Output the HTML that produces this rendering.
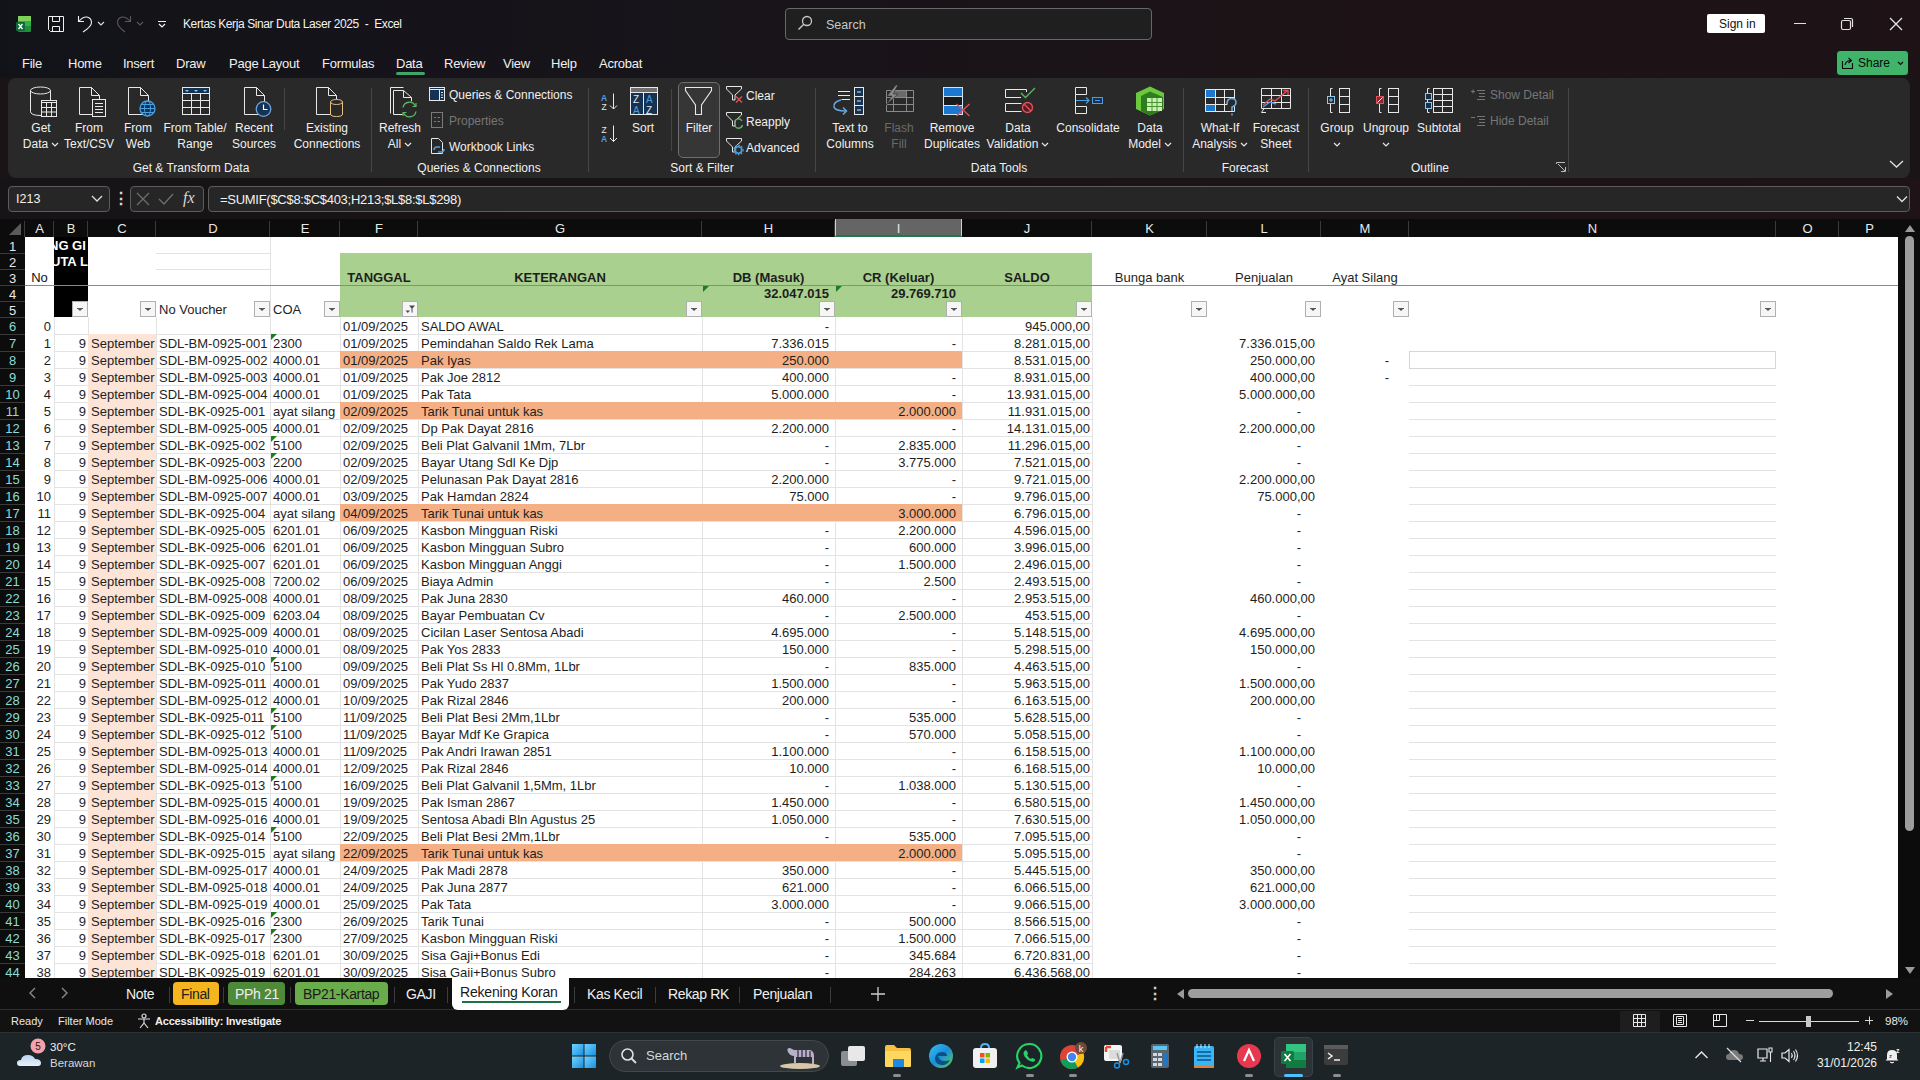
<!DOCTYPE html><html><head><meta charset="utf-8"><style>
*{margin:0;padding:0;box-sizing:border-box}
html,body{width:1920px;height:1080px;overflow:hidden;background:#1a1416;font-family:"Liberation Sans",sans-serif}
.t{position:absolute;white-space:nowrap;color:#fff}
.c{position:absolute;white-space:nowrap;overflow:hidden;font-size:13px;color:#1e1e1e}
svg{position:absolute;overflow:visible}
</style></head><body>
<div style="position:absolute;left:0px;top:0px;width:1920px;height:78px;background:linear-gradient(90deg,#121318 0%,#17141a 35%,#1d1317 70%,#1e1216 100%)"></div>
<div style="position:absolute;left:8px;top:78px;width:1902px;height:100px;background:#292929;border-radius:8px"></div>
<div style="position:absolute;left:0px;top:178px;width:1920px;height:41px;background:linear-gradient(90deg,#161416 0%,#1b1416 50%,#1e1316 100%)"></div>
<div style="position:absolute;left:0px;top:219px;width:1920px;height:18px;background:#0c0c0c"></div>
<div style="position:absolute;left:0px;top:237px;width:25px;height:741px;background:#0c0c0c"></div>
<div style="position:absolute;left:25px;top:237px;width:1873px;height:741px;background:#fff"></div>
<div style="position:absolute;left:1900px;top:219px;width:20px;height:759px;background:#0c0c0c"></div>
<div style="position:absolute;left:53px;top:221px;width:1px;height:16px;background:#3a3a3a"></div>
<div class="t" style="left:25px;top:219px;width:29px;height:18px;line-height:19px;text-align:center;font-size:13px;color:#e8e8e8">A</div>
<div style="position:absolute;left:87px;top:221px;width:1px;height:16px;background:#3a3a3a"></div>
<div class="t" style="left:54px;top:219px;width:34px;height:18px;line-height:19px;text-align:center;font-size:13px;color:#e8e8e8">B</div>
<div style="position:absolute;left:155px;top:221px;width:1px;height:16px;background:#3a3a3a"></div>
<div class="t" style="left:88px;top:219px;width:68px;height:18px;line-height:19px;text-align:center;font-size:13px;color:#e8e8e8">C</div>
<div style="position:absolute;left:269px;top:221px;width:1px;height:16px;background:#3a3a3a"></div>
<div class="t" style="left:156px;top:219px;width:114px;height:18px;line-height:19px;text-align:center;font-size:13px;color:#e8e8e8">D</div>
<div style="position:absolute;left:339px;top:221px;width:1px;height:16px;background:#3a3a3a"></div>
<div class="t" style="left:270px;top:219px;width:70px;height:18px;line-height:19px;text-align:center;font-size:13px;color:#e8e8e8">E</div>
<div style="position:absolute;left:417px;top:221px;width:1px;height:16px;background:#3a3a3a"></div>
<div class="t" style="left:340px;top:219px;width:78px;height:18px;line-height:19px;text-align:center;font-size:13px;color:#e8e8e8">F</div>
<div style="position:absolute;left:701px;top:221px;width:1px;height:16px;background:#3a3a3a"></div>
<div class="t" style="left:418px;top:219px;width:284px;height:18px;line-height:19px;text-align:center;font-size:13px;color:#e8e8e8">G</div>
<div style="position:absolute;left:834px;top:221px;width:1px;height:16px;background:#3a3a3a"></div>
<div class="t" style="left:702px;top:219px;width:133px;height:18px;line-height:19px;text-align:center;font-size:13px;color:#e8e8e8">H</div>
<div style="position:absolute;left:835px;top:219px;width:127px;height:18px;background:#656565;border-left:1px solid #d0d0d0;border-right:1px solid #d0d0d0;border-bottom:2px solid #1d7a4a"></div>
<div class="t" style="left:835px;top:219px;width:127px;height:18px;line-height:19px;text-align:center;font-size:13px;color:#e8e8e8">I</div>
<div style="position:absolute;left:1091px;top:221px;width:1px;height:16px;background:#3a3a3a"></div>
<div class="t" style="left:962px;top:219px;width:130px;height:18px;line-height:19px;text-align:center;font-size:13px;color:#e8e8e8">J</div>
<div style="position:absolute;left:1206px;top:221px;width:1px;height:16px;background:#3a3a3a"></div>
<div class="t" style="left:1092px;top:219px;width:115px;height:18px;line-height:19px;text-align:center;font-size:13px;color:#e8e8e8">K</div>
<div style="position:absolute;left:1320px;top:221px;width:1px;height:16px;background:#3a3a3a"></div>
<div class="t" style="left:1207px;top:219px;width:114px;height:18px;line-height:19px;text-align:center;font-size:13px;color:#e8e8e8">L</div>
<div style="position:absolute;left:1408px;top:221px;width:1px;height:16px;background:#3a3a3a"></div>
<div class="t" style="left:1321px;top:219px;width:88px;height:18px;line-height:19px;text-align:center;font-size:13px;color:#e8e8e8">M</div>
<div style="position:absolute;left:1775px;top:221px;width:1px;height:16px;background:#3a3a3a"></div>
<div class="t" style="left:1409px;top:219px;width:367px;height:18px;line-height:19px;text-align:center;font-size:13px;color:#e8e8e8">N</div>
<div style="position:absolute;left:1838px;top:221px;width:1px;height:16px;background:#3a3a3a"></div>
<div class="t" style="left:1776px;top:219px;width:63px;height:18px;line-height:19px;text-align:center;font-size:13px;color:#e8e8e8">O</div>
<div class="t" style="left:1839px;top:219px;width:61px;height:18px;line-height:19px;text-align:center;font-size:13px;color:#e8e8e8">P</div>
<svg style="left:0;top:219px" width="25" height="18"><path d="M21 4 L21 16 L9 16 Z" fill="#5a5a5a"/></svg>
<div style="position:absolute;left:24px;top:221px;width:1px;height:16px;background:#3a3a3a"></div>
<div class="t" style="left:0px;top:237px;width:25px;height:16px;line-height:19px;text-align:center;font-size:13px;color:#e8e8e8">1</div>
<div style="position:absolute;left:0px;top:253px;width:25px;height:1px;background:#3a3a3a"></div>
<div class="t" style="left:0px;top:253px;width:25px;height:16px;line-height:19px;text-align:center;font-size:13px;color:#e8e8e8">2</div>
<div style="position:absolute;left:0px;top:269px;width:25px;height:1px;background:#3a3a3a"></div>
<div class="t" style="left:0px;top:269px;width:25px;height:16px;line-height:19px;text-align:center;font-size:13px;color:#e8e8e8">3</div>
<div style="position:absolute;left:0px;top:285px;width:25px;height:1px;background:#3a3a3a"></div>
<div class="t" style="left:0px;top:285px;width:25px;height:16px;line-height:19px;text-align:center;font-size:13px;color:#e8e8e8">4</div>
<div style="position:absolute;left:0px;top:301px;width:25px;height:1px;background:#3a3a3a"></div>
<div class="t" style="left:0px;top:301px;width:25px;height:16px;line-height:19px;text-align:center;font-size:13px;color:#e8e8e8">5</div>
<div style="position:absolute;left:0px;top:317px;width:25px;height:1px;background:#3a3a3a"></div>
<div class="t" style="left:0px;top:317px;width:25px;height:17px;line-height:20px;text-align:center;font-size:13px;color:#8adcd4">6</div>
<div style="position:absolute;left:0px;top:334px;width:25px;height:1px;background:#3a3a3a"></div>
<div class="t" style="left:0px;top:334px;width:25px;height:17px;line-height:20px;text-align:center;font-size:13px;color:#8adcd4">7</div>
<div style="position:absolute;left:0px;top:351px;width:25px;height:1px;background:#3a3a3a"></div>
<div class="t" style="left:0px;top:351px;width:25px;height:17px;line-height:20px;text-align:center;font-size:13px;color:#8adcd4">8</div>
<div style="position:absolute;left:0px;top:368px;width:25px;height:1px;background:#3a3a3a"></div>
<div class="t" style="left:0px;top:368px;width:25px;height:17px;line-height:20px;text-align:center;font-size:13px;color:#8adcd4">9</div>
<div style="position:absolute;left:0px;top:385px;width:25px;height:1px;background:#3a3a3a"></div>
<div class="t" style="left:0px;top:385px;width:25px;height:17px;line-height:20px;text-align:center;font-size:13px;color:#8adcd4">10</div>
<div style="position:absolute;left:0px;top:402px;width:25px;height:1px;background:#3a3a3a"></div>
<div class="t" style="left:0px;top:402px;width:25px;height:17px;line-height:20px;text-align:center;font-size:13px;color:#8adcd4">11</div>
<div style="position:absolute;left:0px;top:419px;width:25px;height:1px;background:#3a3a3a"></div>
<div class="t" style="left:0px;top:419px;width:25px;height:17px;line-height:20px;text-align:center;font-size:13px;color:#8adcd4">12</div>
<div style="position:absolute;left:0px;top:436px;width:25px;height:1px;background:#3a3a3a"></div>
<div class="t" style="left:0px;top:436px;width:25px;height:17px;line-height:20px;text-align:center;font-size:13px;color:#8adcd4">13</div>
<div style="position:absolute;left:0px;top:453px;width:25px;height:1px;background:#3a3a3a"></div>
<div class="t" style="left:0px;top:453px;width:25px;height:17px;line-height:20px;text-align:center;font-size:13px;color:#8adcd4">14</div>
<div style="position:absolute;left:0px;top:470px;width:25px;height:1px;background:#3a3a3a"></div>
<div class="t" style="left:0px;top:470px;width:25px;height:17px;line-height:20px;text-align:center;font-size:13px;color:#8adcd4">15</div>
<div style="position:absolute;left:0px;top:487px;width:25px;height:1px;background:#3a3a3a"></div>
<div class="t" style="left:0px;top:487px;width:25px;height:17px;line-height:20px;text-align:center;font-size:13px;color:#8adcd4">16</div>
<div style="position:absolute;left:0px;top:504px;width:25px;height:1px;background:#3a3a3a"></div>
<div class="t" style="left:0px;top:504px;width:25px;height:17px;line-height:20px;text-align:center;font-size:13px;color:#8adcd4">17</div>
<div style="position:absolute;left:0px;top:521px;width:25px;height:1px;background:#3a3a3a"></div>
<div class="t" style="left:0px;top:521px;width:25px;height:17px;line-height:20px;text-align:center;font-size:13px;color:#8adcd4">18</div>
<div style="position:absolute;left:0px;top:538px;width:25px;height:1px;background:#3a3a3a"></div>
<div class="t" style="left:0px;top:538px;width:25px;height:17px;line-height:20px;text-align:center;font-size:13px;color:#8adcd4">19</div>
<div style="position:absolute;left:0px;top:555px;width:25px;height:1px;background:#3a3a3a"></div>
<div class="t" style="left:0px;top:555px;width:25px;height:17px;line-height:20px;text-align:center;font-size:13px;color:#8adcd4">20</div>
<div style="position:absolute;left:0px;top:572px;width:25px;height:1px;background:#3a3a3a"></div>
<div class="t" style="left:0px;top:572px;width:25px;height:17px;line-height:20px;text-align:center;font-size:13px;color:#8adcd4">21</div>
<div style="position:absolute;left:0px;top:589px;width:25px;height:1px;background:#3a3a3a"></div>
<div class="t" style="left:0px;top:589px;width:25px;height:17px;line-height:20px;text-align:center;font-size:13px;color:#8adcd4">22</div>
<div style="position:absolute;left:0px;top:606px;width:25px;height:1px;background:#3a3a3a"></div>
<div class="t" style="left:0px;top:606px;width:25px;height:17px;line-height:20px;text-align:center;font-size:13px;color:#8adcd4">23</div>
<div style="position:absolute;left:0px;top:623px;width:25px;height:1px;background:#3a3a3a"></div>
<div class="t" style="left:0px;top:623px;width:25px;height:17px;line-height:20px;text-align:center;font-size:13px;color:#8adcd4">24</div>
<div style="position:absolute;left:0px;top:640px;width:25px;height:1px;background:#3a3a3a"></div>
<div class="t" style="left:0px;top:640px;width:25px;height:17px;line-height:20px;text-align:center;font-size:13px;color:#8adcd4">25</div>
<div style="position:absolute;left:0px;top:657px;width:25px;height:1px;background:#3a3a3a"></div>
<div class="t" style="left:0px;top:657px;width:25px;height:17px;line-height:20px;text-align:center;font-size:13px;color:#8adcd4">26</div>
<div style="position:absolute;left:0px;top:674px;width:25px;height:1px;background:#3a3a3a"></div>
<div class="t" style="left:0px;top:674px;width:25px;height:17px;line-height:20px;text-align:center;font-size:13px;color:#8adcd4">27</div>
<div style="position:absolute;left:0px;top:691px;width:25px;height:1px;background:#3a3a3a"></div>
<div class="t" style="left:0px;top:691px;width:25px;height:17px;line-height:20px;text-align:center;font-size:13px;color:#8adcd4">28</div>
<div style="position:absolute;left:0px;top:708px;width:25px;height:1px;background:#3a3a3a"></div>
<div class="t" style="left:0px;top:708px;width:25px;height:17px;line-height:20px;text-align:center;font-size:13px;color:#8adcd4">29</div>
<div style="position:absolute;left:0px;top:725px;width:25px;height:1px;background:#3a3a3a"></div>
<div class="t" style="left:0px;top:725px;width:25px;height:17px;line-height:20px;text-align:center;font-size:13px;color:#8adcd4">30</div>
<div style="position:absolute;left:0px;top:742px;width:25px;height:1px;background:#3a3a3a"></div>
<div class="t" style="left:0px;top:742px;width:25px;height:17px;line-height:20px;text-align:center;font-size:13px;color:#8adcd4">31</div>
<div style="position:absolute;left:0px;top:759px;width:25px;height:1px;background:#3a3a3a"></div>
<div class="t" style="left:0px;top:759px;width:25px;height:17px;line-height:20px;text-align:center;font-size:13px;color:#8adcd4">32</div>
<div style="position:absolute;left:0px;top:776px;width:25px;height:1px;background:#3a3a3a"></div>
<div class="t" style="left:0px;top:776px;width:25px;height:17px;line-height:20px;text-align:center;font-size:13px;color:#8adcd4">33</div>
<div style="position:absolute;left:0px;top:793px;width:25px;height:1px;background:#3a3a3a"></div>
<div class="t" style="left:0px;top:793px;width:25px;height:17px;line-height:20px;text-align:center;font-size:13px;color:#8adcd4">34</div>
<div style="position:absolute;left:0px;top:810px;width:25px;height:1px;background:#3a3a3a"></div>
<div class="t" style="left:0px;top:810px;width:25px;height:17px;line-height:20px;text-align:center;font-size:13px;color:#8adcd4">35</div>
<div style="position:absolute;left:0px;top:827px;width:25px;height:1px;background:#3a3a3a"></div>
<div class="t" style="left:0px;top:827px;width:25px;height:17px;line-height:20px;text-align:center;font-size:13px;color:#8adcd4">36</div>
<div style="position:absolute;left:0px;top:844px;width:25px;height:1px;background:#3a3a3a"></div>
<div class="t" style="left:0px;top:844px;width:25px;height:17px;line-height:20px;text-align:center;font-size:13px;color:#8adcd4">37</div>
<div style="position:absolute;left:0px;top:861px;width:25px;height:1px;background:#3a3a3a"></div>
<div class="t" style="left:0px;top:861px;width:25px;height:17px;line-height:20px;text-align:center;font-size:13px;color:#8adcd4">38</div>
<div style="position:absolute;left:0px;top:878px;width:25px;height:1px;background:#3a3a3a"></div>
<div class="t" style="left:0px;top:878px;width:25px;height:17px;line-height:20px;text-align:center;font-size:13px;color:#8adcd4">39</div>
<div style="position:absolute;left:0px;top:895px;width:25px;height:1px;background:#3a3a3a"></div>
<div class="t" style="left:0px;top:895px;width:25px;height:17px;line-height:20px;text-align:center;font-size:13px;color:#8adcd4">40</div>
<div style="position:absolute;left:0px;top:912px;width:25px;height:1px;background:#3a3a3a"></div>
<div class="t" style="left:0px;top:912px;width:25px;height:17px;line-height:20px;text-align:center;font-size:13px;color:#8adcd4">41</div>
<div style="position:absolute;left:0px;top:929px;width:25px;height:1px;background:#3a3a3a"></div>
<div class="t" style="left:0px;top:929px;width:25px;height:17px;line-height:20px;text-align:center;font-size:13px;color:#8adcd4">42</div>
<div style="position:absolute;left:0px;top:946px;width:25px;height:1px;background:#3a3a3a"></div>
<div class="t" style="left:0px;top:946px;width:25px;height:17px;line-height:20px;text-align:center;font-size:13px;color:#8adcd4">43</div>
<div style="position:absolute;left:0px;top:963px;width:25px;height:1px;background:#3a3a3a"></div>
<div class="t" style="left:0px;top:963px;width:25px;height:17px;line-height:20px;text-align:center;font-size:13px;color:#8adcd4">44</div>
<div style="position:absolute;left:0px;top:980px;width:25px;height:1px;background:#3a3a3a"></div>
<div style="position:absolute;left:54px;top:334px;width:1038px;height:1px;background:#e3e3e3"></div>
<div style="position:absolute;left:54px;top:351px;width:1038px;height:1px;background:#e3e3e3"></div>
<div style="position:absolute;left:54px;top:368px;width:1038px;height:1px;background:#e3e3e3"></div>
<div style="position:absolute;left:1409px;top:368px;width:367px;height:1px;background:#e3e3e3"></div>
<div style="position:absolute;left:54px;top:385px;width:1038px;height:1px;background:#e3e3e3"></div>
<div style="position:absolute;left:1409px;top:385px;width:367px;height:1px;background:#e3e3e3"></div>
<div style="position:absolute;left:54px;top:402px;width:1038px;height:1px;background:#e3e3e3"></div>
<div style="position:absolute;left:1409px;top:402px;width:367px;height:1px;background:#e3e3e3"></div>
<div style="position:absolute;left:54px;top:419px;width:1038px;height:1px;background:#e3e3e3"></div>
<div style="position:absolute;left:1409px;top:419px;width:367px;height:1px;background:#e3e3e3"></div>
<div style="position:absolute;left:54px;top:436px;width:1038px;height:1px;background:#e3e3e3"></div>
<div style="position:absolute;left:1409px;top:436px;width:367px;height:1px;background:#e3e3e3"></div>
<div style="position:absolute;left:54px;top:453px;width:1038px;height:1px;background:#e3e3e3"></div>
<div style="position:absolute;left:1409px;top:453px;width:367px;height:1px;background:#e3e3e3"></div>
<div style="position:absolute;left:54px;top:470px;width:1038px;height:1px;background:#e3e3e3"></div>
<div style="position:absolute;left:1409px;top:470px;width:367px;height:1px;background:#e3e3e3"></div>
<div style="position:absolute;left:54px;top:487px;width:1038px;height:1px;background:#e3e3e3"></div>
<div style="position:absolute;left:1409px;top:487px;width:367px;height:1px;background:#e3e3e3"></div>
<div style="position:absolute;left:54px;top:504px;width:1038px;height:1px;background:#e3e3e3"></div>
<div style="position:absolute;left:1409px;top:504px;width:367px;height:1px;background:#e3e3e3"></div>
<div style="position:absolute;left:54px;top:521px;width:1038px;height:1px;background:#e3e3e3"></div>
<div style="position:absolute;left:1409px;top:521px;width:367px;height:1px;background:#e3e3e3"></div>
<div style="position:absolute;left:54px;top:538px;width:1038px;height:1px;background:#e3e3e3"></div>
<div style="position:absolute;left:1409px;top:538px;width:367px;height:1px;background:#e3e3e3"></div>
<div style="position:absolute;left:54px;top:555px;width:1038px;height:1px;background:#e3e3e3"></div>
<div style="position:absolute;left:1409px;top:555px;width:367px;height:1px;background:#e3e3e3"></div>
<div style="position:absolute;left:54px;top:572px;width:1038px;height:1px;background:#e3e3e3"></div>
<div style="position:absolute;left:1409px;top:572px;width:367px;height:1px;background:#e3e3e3"></div>
<div style="position:absolute;left:54px;top:589px;width:1038px;height:1px;background:#e3e3e3"></div>
<div style="position:absolute;left:1409px;top:589px;width:367px;height:1px;background:#e3e3e3"></div>
<div style="position:absolute;left:54px;top:606px;width:1038px;height:1px;background:#e3e3e3"></div>
<div style="position:absolute;left:1409px;top:606px;width:367px;height:1px;background:#e3e3e3"></div>
<div style="position:absolute;left:54px;top:623px;width:1038px;height:1px;background:#e3e3e3"></div>
<div style="position:absolute;left:1409px;top:623px;width:367px;height:1px;background:#e3e3e3"></div>
<div style="position:absolute;left:54px;top:640px;width:1038px;height:1px;background:#e3e3e3"></div>
<div style="position:absolute;left:1409px;top:640px;width:367px;height:1px;background:#e3e3e3"></div>
<div style="position:absolute;left:54px;top:657px;width:1038px;height:1px;background:#e3e3e3"></div>
<div style="position:absolute;left:1409px;top:657px;width:367px;height:1px;background:#e3e3e3"></div>
<div style="position:absolute;left:54px;top:674px;width:1038px;height:1px;background:#e3e3e3"></div>
<div style="position:absolute;left:1409px;top:674px;width:367px;height:1px;background:#e3e3e3"></div>
<div style="position:absolute;left:54px;top:691px;width:1038px;height:1px;background:#e3e3e3"></div>
<div style="position:absolute;left:1409px;top:691px;width:367px;height:1px;background:#e3e3e3"></div>
<div style="position:absolute;left:54px;top:708px;width:1038px;height:1px;background:#e3e3e3"></div>
<div style="position:absolute;left:1409px;top:708px;width:367px;height:1px;background:#e3e3e3"></div>
<div style="position:absolute;left:54px;top:725px;width:1038px;height:1px;background:#e3e3e3"></div>
<div style="position:absolute;left:1409px;top:725px;width:367px;height:1px;background:#e3e3e3"></div>
<div style="position:absolute;left:54px;top:742px;width:1038px;height:1px;background:#e3e3e3"></div>
<div style="position:absolute;left:1409px;top:742px;width:367px;height:1px;background:#e3e3e3"></div>
<div style="position:absolute;left:54px;top:759px;width:1038px;height:1px;background:#e3e3e3"></div>
<div style="position:absolute;left:1409px;top:759px;width:367px;height:1px;background:#e3e3e3"></div>
<div style="position:absolute;left:54px;top:776px;width:1038px;height:1px;background:#e3e3e3"></div>
<div style="position:absolute;left:1409px;top:776px;width:367px;height:1px;background:#e3e3e3"></div>
<div style="position:absolute;left:54px;top:793px;width:1038px;height:1px;background:#e3e3e3"></div>
<div style="position:absolute;left:1409px;top:793px;width:367px;height:1px;background:#e3e3e3"></div>
<div style="position:absolute;left:54px;top:810px;width:1038px;height:1px;background:#e3e3e3"></div>
<div style="position:absolute;left:1409px;top:810px;width:367px;height:1px;background:#e3e3e3"></div>
<div style="position:absolute;left:54px;top:827px;width:1038px;height:1px;background:#e3e3e3"></div>
<div style="position:absolute;left:1409px;top:827px;width:367px;height:1px;background:#e3e3e3"></div>
<div style="position:absolute;left:54px;top:844px;width:1038px;height:1px;background:#e3e3e3"></div>
<div style="position:absolute;left:1409px;top:844px;width:367px;height:1px;background:#e3e3e3"></div>
<div style="position:absolute;left:54px;top:861px;width:1038px;height:1px;background:#e3e3e3"></div>
<div style="position:absolute;left:1409px;top:861px;width:367px;height:1px;background:#e3e3e3"></div>
<div style="position:absolute;left:54px;top:878px;width:1038px;height:1px;background:#e3e3e3"></div>
<div style="position:absolute;left:1409px;top:878px;width:367px;height:1px;background:#e3e3e3"></div>
<div style="position:absolute;left:54px;top:895px;width:1038px;height:1px;background:#e3e3e3"></div>
<div style="position:absolute;left:1409px;top:895px;width:367px;height:1px;background:#e3e3e3"></div>
<div style="position:absolute;left:54px;top:912px;width:1038px;height:1px;background:#e3e3e3"></div>
<div style="position:absolute;left:1409px;top:912px;width:367px;height:1px;background:#e3e3e3"></div>
<div style="position:absolute;left:54px;top:929px;width:1038px;height:1px;background:#e3e3e3"></div>
<div style="position:absolute;left:1409px;top:929px;width:367px;height:1px;background:#e3e3e3"></div>
<div style="position:absolute;left:54px;top:946px;width:1038px;height:1px;background:#e3e3e3"></div>
<div style="position:absolute;left:1409px;top:946px;width:367px;height:1px;background:#e3e3e3"></div>
<div style="position:absolute;left:54px;top:963px;width:1038px;height:1px;background:#e3e3e3"></div>
<div style="position:absolute;left:1409px;top:963px;width:367px;height:1px;background:#e3e3e3"></div>
<div style="position:absolute;left:54px;top:980px;width:1038px;height:1px;background:#e3e3e3"></div>
<div style="position:absolute;left:1409px;top:980px;width:367px;height:1px;background:#e3e3e3"></div>
<div style="position:absolute;left:54px;top:317px;width:1px;height:661px;background:#e3e3e3"></div>
<div style="position:absolute;left:88px;top:317px;width:1px;height:661px;background:#e3e3e3"></div>
<div style="position:absolute;left:156px;top:317px;width:1px;height:661px;background:#e3e3e3"></div>
<div style="position:absolute;left:270px;top:317px;width:1px;height:661px;background:#e3e3e3"></div>
<div style="position:absolute;left:340px;top:317px;width:1px;height:661px;background:#e3e3e3"></div>
<div style="position:absolute;left:418px;top:317px;width:1px;height:661px;background:#e3e3e3"></div>
<div style="position:absolute;left:702px;top:317px;width:1px;height:661px;background:#e3e3e3"></div>
<div style="position:absolute;left:835px;top:317px;width:1px;height:661px;background:#e3e3e3"></div>
<div style="position:absolute;left:962px;top:317px;width:1px;height:661px;background:#e3e3e3"></div>
<div style="position:absolute;left:1092px;top:317px;width:1px;height:661px;background:#e3e3e3"></div>
<div style="position:absolute;left:156px;top:253px;width:114px;height:1px;background:#e3e3e3"></div>
<div style="position:absolute;left:156px;top:269px;width:114px;height:1px;background:#e3e3e3"></div>
<div style="position:absolute;left:270px;top:237px;width:1px;height:80px;background:#e3e3e3"></div>
<div style="position:absolute;left:88px;top:334px;width:68px;height:644px;background:#fce4d6"></div>
<div style="position:absolute;left:54px;top:237px;width:34px;height:80px;background:#000"></div>
<div class="c" style="left:54px;top:237px;width:34px;height:16px;line-height:17px;color:#fff;font-weight:bold;text-indent:-5px">NG GI</div>
<div class="c" style="left:54px;top:253px;width:34px;height:16px;line-height:17px;color:#fff;font-weight:bold;text-indent:-3px">UTA L</div>
<div style="position:absolute;left:340px;top:253px;width:752px;height:64px;background:#a9d08e"></div>
<div style="position:absolute;left:25px;top:285px;width:1873px;height:1px;background:#8a8a8a"></div>
<div class="c" style="left:25px;top:269px;width:29px;height:16px;line-height:18px;text-align:center;color:#111;">No</div>
<div class="c" style="left:340px;top:269px;width:78px;height:16px;line-height:18px;text-align:center;font-weight:bold;">TANGGAL</div>
<div class="c" style="left:418px;top:269px;width:284px;height:16px;line-height:18px;text-align:center;font-weight:bold;">KETERANGAN</div>
<div class="c" style="left:702px;top:269px;width:133px;height:16px;line-height:18px;text-align:center;font-weight:bold;">DB (Masuk)</div>
<div class="c" style="left:835px;top:269px;width:127px;height:16px;line-height:18px;text-align:center;font-weight:bold;">CR (Keluar)</div>
<div class="c" style="left:962px;top:269px;width:130px;height:16px;line-height:18px;text-align:center;font-weight:bold;">SALDO</div>
<div class="c" style="left:1092px;top:269px;width:115px;height:16px;line-height:18px;text-align:center;">Bunga bank</div>
<div class="c" style="left:1207px;top:269px;width:114px;height:16px;line-height:18px;text-align:center;">Penjualan</div>
<div class="c" style="left:1321px;top:269px;width:88px;height:16px;line-height:18px;text-align:center;">Ayat Silang</div>
<div class="c" style="left:702px;top:285px;width:133px;height:16px;line-height:18px;text-align:right;padding-right:6px;font-weight:bold;">32.047.015</div>
<div class="c" style="left:835px;top:285px;width:127px;height:16px;line-height:18px;text-align:right;padding-right:6px;font-weight:bold;">29.769.710</div>
<div class="c" style="left:156px;top:301px;width:114px;height:16px;line-height:18px;text-align:left;padding-left:3px;">No Voucher</div>
<div class="c" style="left:270px;top:301px;width:70px;height:16px;line-height:18px;text-align:left;padding-left:3px;">COA</div>
<svg style="left:703px;top:286px" width="6" height="6"><path d="M0 0 L6 0 L0 6Z" fill="#1e7b1e"/></svg>
<svg style="left:836px;top:286px" width="6" height="6"><path d="M0 0 L6 0 L0 6Z" fill="#1e7b1e"/></svg>
<div style="position:absolute;left:72px;top:301px;width:16px;height:16px;background:#f6f6f6;border:1px solid #b0b0b0"></div>
<svg style="left:72px;top:301px" width="16" height="16"><path d="M5 7.5 H11" stroke="#5a5a5a" stroke-width="1"/><path d="M6 8 L8 10 L10 8Z" fill="#4a4a4a"/></svg>
<div style="position:absolute;left:140px;top:301px;width:16px;height:16px;background:#f6f6f6;border:1px solid #b0b0b0"></div>
<svg style="left:140px;top:301px" width="16" height="16"><path d="M5 7.5 H11" stroke="#5a5a5a" stroke-width="1"/><path d="M6 8 L8 10 L10 8Z" fill="#4a4a4a"/></svg>
<div style="position:absolute;left:254px;top:301px;width:16px;height:16px;background:#f6f6f6;border:1px solid #b0b0b0"></div>
<svg style="left:254px;top:301px" width="16" height="16"><path d="M5 7.5 H11" stroke="#5a5a5a" stroke-width="1"/><path d="M6 8 L8 10 L10 8Z" fill="#4a4a4a"/></svg>
<div style="position:absolute;left:324px;top:301px;width:16px;height:16px;background:#f6f6f6;border:1px solid #b0b0b0"></div>
<svg style="left:324px;top:301px" width="16" height="16"><path d="M5 7.5 H11" stroke="#5a5a5a" stroke-width="1"/><path d="M6 8 L8 10 L10 8Z" fill="#4a4a4a"/></svg>
<div style="position:absolute;left:686px;top:301px;width:16px;height:16px;background:#f6f6f6;border:1px solid #b0b0b0"></div>
<svg style="left:686px;top:301px" width="16" height="16"><path d="M5 7.5 H11" stroke="#5a5a5a" stroke-width="1"/><path d="M6 8 L8 10 L10 8Z" fill="#4a4a4a"/></svg>
<div style="position:absolute;left:819px;top:301px;width:16px;height:16px;background:#f6f6f6;border:1px solid #b0b0b0"></div>
<svg style="left:819px;top:301px" width="16" height="16"><path d="M5 7.5 H11" stroke="#5a5a5a" stroke-width="1"/><path d="M6 8 L8 10 L10 8Z" fill="#4a4a4a"/></svg>
<div style="position:absolute;left:946px;top:301px;width:16px;height:16px;background:#f6f6f6;border:1px solid #b0b0b0"></div>
<svg style="left:946px;top:301px" width="16" height="16"><path d="M5 7.5 H11" stroke="#5a5a5a" stroke-width="1"/><path d="M6 8 L8 10 L10 8Z" fill="#4a4a4a"/></svg>
<div style="position:absolute;left:1076px;top:301px;width:16px;height:16px;background:#f6f6f6;border:1px solid #b0b0b0"></div>
<svg style="left:1076px;top:301px" width="16" height="16"><path d="M5 7.5 H11" stroke="#5a5a5a" stroke-width="1"/><path d="M6 8 L8 10 L10 8Z" fill="#4a4a4a"/></svg>
<div style="position:absolute;left:1191px;top:301px;width:16px;height:16px;background:#f6f6f6;border:1px solid #b0b0b0"></div>
<svg style="left:1191px;top:301px" width="16" height="16"><path d="M5 7.5 H11" stroke="#5a5a5a" stroke-width="1"/><path d="M6 8 L8 10 L10 8Z" fill="#4a4a4a"/></svg>
<div style="position:absolute;left:1305px;top:301px;width:16px;height:16px;background:#f6f6f6;border:1px solid #b0b0b0"></div>
<svg style="left:1305px;top:301px" width="16" height="16"><path d="M5 7.5 H11" stroke="#5a5a5a" stroke-width="1"/><path d="M6 8 L8 10 L10 8Z" fill="#4a4a4a"/></svg>
<div style="position:absolute;left:1393px;top:301px;width:16px;height:16px;background:#f6f6f6;border:1px solid #b0b0b0"></div>
<svg style="left:1393px;top:301px" width="16" height="16"><path d="M5 7.5 H11" stroke="#5a5a5a" stroke-width="1"/><path d="M6 8 L8 10 L10 8Z" fill="#4a4a4a"/></svg>
<div style="position:absolute;left:1760px;top:301px;width:16px;height:16px;background:#f6f6f6;border:1px solid #b0b0b0"></div>
<svg style="left:1760px;top:301px" width="16" height="16"><path d="M5 7.5 H11" stroke="#5a5a5a" stroke-width="1"/><path d="M6 8 L8 10 L10 8Z" fill="#4a4a4a"/></svg>
<div style="position:absolute;left:402px;top:301px;width:16px;height:16px;background:#f6f6f6;border:1px solid #b0b0b0"></div>
<svg style="left:402px;top:301px" width="16" height="16"><path d="M7 4.5 H13 L10.5 7.5 V11.5 H9.5 V7.5 Z" fill="#4a4a4a"/><path d="M3.5 9.5 H8 L5.75 12Z" fill="#4a4a4a"/></svg>
<div class="c" style="left:25px;top:317px;width:29px;height:17px;line-height:19px;text-align:right;padding-right:3px;">0</div>
<div class="c" style="left:340px;top:317px;width:78px;height:17px;line-height:19px;text-align:left;padding-left:3px;">01/09/2025</div>
<div class="c" style="left:418px;top:317px;width:284px;height:17px;line-height:19px;text-align:left;padding-left:3px;">SALDO AWAL</div>
<div class="c" style="left:702px;top:317px;width:133px;height:17px;line-height:19px;text-align:right;padding-right:6px;">-</div>
<div class="c" style="left:962px;top:317px;width:130px;height:17px;line-height:19px;text-align:right;padding-right:2px;">945.000,00</div>
<div class="c" style="left:25px;top:334px;width:29px;height:17px;line-height:19px;text-align:right;padding-right:3px;">1</div>
<div class="c" style="left:54px;top:334px;width:34px;height:17px;line-height:19px;text-align:right;padding-right:2px;">9</div>
<div class="c" style="left:88px;top:334px;width:68px;height:17px;line-height:19px;text-align:left;padding-left:3px;">September</div>
<div class="c" style="left:156px;top:334px;width:114px;height:17px;line-height:19px;text-align:left;padding-left:3px;">SDL-BM-0925-001</div>
<div class="c" style="left:270px;top:334px;width:70px;height:17px;line-height:19px;text-align:left;padding-left:3px;">2300</div>
<svg style="left:271px;top:334px" width="6" height="6"><path d="M0 0 L6 0 L0 6Z" fill="#1e7b1e"/></svg>
<div class="c" style="left:340px;top:334px;width:78px;height:17px;line-height:19px;text-align:left;padding-left:3px;">01/09/2025</div>
<div class="c" style="left:418px;top:334px;width:284px;height:17px;line-height:19px;text-align:left;padding-left:3px;">Pemindahan Saldo Rek Lama</div>
<div class="c" style="left:702px;top:334px;width:133px;height:17px;line-height:19px;text-align:right;padding-right:6px;">7.336.015</div>
<div class="c" style="left:835px;top:334px;width:127px;height:17px;line-height:19px;text-align:right;padding-right:6px;">-</div>
<div class="c" style="left:962px;top:334px;width:130px;height:17px;line-height:19px;text-align:right;padding-right:2px;">8.281.015,00</div>
<div class="c" style="left:1207px;top:334px;width:114px;height:17px;line-height:19px;text-align:right;padding-right:6px;">7.336.015,00</div>
<div style="position:absolute;left:340px;top:351px;width:622px;height:17px;background:#f4b084"></div>
<div class="c" style="left:25px;top:351px;width:29px;height:17px;line-height:19px;text-align:right;padding-right:3px;">2</div>
<div class="c" style="left:54px;top:351px;width:34px;height:17px;line-height:19px;text-align:right;padding-right:2px;">9</div>
<div class="c" style="left:88px;top:351px;width:68px;height:17px;line-height:19px;text-align:left;padding-left:3px;">September</div>
<div class="c" style="left:156px;top:351px;width:114px;height:17px;line-height:19px;text-align:left;padding-left:3px;">SDL-BM-0925-002</div>
<div class="c" style="left:270px;top:351px;width:70px;height:17px;line-height:19px;text-align:left;padding-left:3px;">4000.01</div>
<div class="c" style="left:340px;top:351px;width:78px;height:17px;line-height:19px;text-align:left;padding-left:3px;">01/09/2025</div>
<div class="c" style="left:418px;top:351px;width:284px;height:17px;line-height:19px;text-align:left;padding-left:3px;">Pak Iyas</div>
<div class="c" style="left:702px;top:351px;width:133px;height:17px;line-height:19px;text-align:right;padding-right:6px;">250.000</div>
<div class="c" style="left:835px;top:351px;width:127px;height:17px;line-height:19px;text-align:right;padding-right:6px;"></div>
<div class="c" style="left:962px;top:351px;width:130px;height:17px;line-height:19px;text-align:right;padding-right:2px;">8.531.015,00</div>
<div class="c" style="left:1207px;top:351px;width:114px;height:17px;line-height:19px;text-align:right;padding-right:6px;">250.000,00</div>
<div class="c" style="left:1321px;top:351px;width:88px;height:17px;line-height:19px;text-align:right;padding-right:20px;">-</div>
<div class="c" style="left:25px;top:368px;width:29px;height:17px;line-height:19px;text-align:right;padding-right:3px;">3</div>
<div class="c" style="left:54px;top:368px;width:34px;height:17px;line-height:19px;text-align:right;padding-right:2px;">9</div>
<div class="c" style="left:88px;top:368px;width:68px;height:17px;line-height:19px;text-align:left;padding-left:3px;">September</div>
<div class="c" style="left:156px;top:368px;width:114px;height:17px;line-height:19px;text-align:left;padding-left:3px;">SDL-BM-0925-003</div>
<div class="c" style="left:270px;top:368px;width:70px;height:17px;line-height:19px;text-align:left;padding-left:3px;">4000.01</div>
<div class="c" style="left:340px;top:368px;width:78px;height:17px;line-height:19px;text-align:left;padding-left:3px;">01/09/2025</div>
<div class="c" style="left:418px;top:368px;width:284px;height:17px;line-height:19px;text-align:left;padding-left:3px;">Pak Joe 2812</div>
<div class="c" style="left:702px;top:368px;width:133px;height:17px;line-height:19px;text-align:right;padding-right:6px;">400.000</div>
<div class="c" style="left:835px;top:368px;width:127px;height:17px;line-height:19px;text-align:right;padding-right:6px;">-</div>
<div class="c" style="left:962px;top:368px;width:130px;height:17px;line-height:19px;text-align:right;padding-right:2px;">8.931.015,00</div>
<div class="c" style="left:1207px;top:368px;width:114px;height:17px;line-height:19px;text-align:right;padding-right:6px;">400.000,00</div>
<div class="c" style="left:1321px;top:368px;width:88px;height:17px;line-height:19px;text-align:right;padding-right:20px;">-</div>
<div class="c" style="left:25px;top:385px;width:29px;height:17px;line-height:19px;text-align:right;padding-right:3px;">4</div>
<div class="c" style="left:54px;top:385px;width:34px;height:17px;line-height:19px;text-align:right;padding-right:2px;">9</div>
<div class="c" style="left:88px;top:385px;width:68px;height:17px;line-height:19px;text-align:left;padding-left:3px;">September</div>
<div class="c" style="left:156px;top:385px;width:114px;height:17px;line-height:19px;text-align:left;padding-left:3px;">SDL-BM-0925-004</div>
<div class="c" style="left:270px;top:385px;width:70px;height:17px;line-height:19px;text-align:left;padding-left:3px;">4000.01</div>
<div class="c" style="left:340px;top:385px;width:78px;height:17px;line-height:19px;text-align:left;padding-left:3px;">01/09/2025</div>
<div class="c" style="left:418px;top:385px;width:284px;height:17px;line-height:19px;text-align:left;padding-left:3px;">Pak Tata</div>
<div class="c" style="left:702px;top:385px;width:133px;height:17px;line-height:19px;text-align:right;padding-right:6px;">5.000.000</div>
<div class="c" style="left:835px;top:385px;width:127px;height:17px;line-height:19px;text-align:right;padding-right:6px;">-</div>
<div class="c" style="left:962px;top:385px;width:130px;height:17px;line-height:19px;text-align:right;padding-right:2px;">13.931.015,00</div>
<div class="c" style="left:1207px;top:385px;width:114px;height:17px;line-height:19px;text-align:right;padding-right:6px;">5.000.000,00</div>
<div style="position:absolute;left:340px;top:402px;width:622px;height:17px;background:#f4b084"></div>
<div class="c" style="left:25px;top:402px;width:29px;height:17px;line-height:19px;text-align:right;padding-right:3px;">5</div>
<div class="c" style="left:54px;top:402px;width:34px;height:17px;line-height:19px;text-align:right;padding-right:2px;">9</div>
<div class="c" style="left:88px;top:402px;width:68px;height:17px;line-height:19px;text-align:left;padding-left:3px;">September</div>
<div class="c" style="left:156px;top:402px;width:114px;height:17px;line-height:19px;text-align:left;padding-left:3px;">SDL-BK-0925-001</div>
<div class="c" style="left:270px;top:402px;width:70px;height:17px;line-height:19px;text-align:left;padding-left:3px;">ayat silang</div>
<div class="c" style="left:340px;top:402px;width:78px;height:17px;line-height:19px;text-align:left;padding-left:3px;">02/09/2025</div>
<div class="c" style="left:418px;top:402px;width:284px;height:17px;line-height:19px;text-align:left;padding-left:3px;">Tarik Tunai untuk kas</div>
<div class="c" style="left:702px;top:402px;width:133px;height:17px;line-height:19px;text-align:right;padding-right:6px;"></div>
<div class="c" style="left:835px;top:402px;width:127px;height:17px;line-height:19px;text-align:right;padding-right:6px;">2.000.000</div>
<div class="c" style="left:962px;top:402px;width:130px;height:17px;line-height:19px;text-align:right;padding-right:2px;">11.931.015,00</div>
<div class="c" style="left:1207px;top:402px;width:114px;height:17px;line-height:19px;text-align:right;padding-right:20px;">-</div>
<div class="c" style="left:25px;top:419px;width:29px;height:17px;line-height:19px;text-align:right;padding-right:3px;">6</div>
<div class="c" style="left:54px;top:419px;width:34px;height:17px;line-height:19px;text-align:right;padding-right:2px;">9</div>
<div class="c" style="left:88px;top:419px;width:68px;height:17px;line-height:19px;text-align:left;padding-left:3px;">September</div>
<div class="c" style="left:156px;top:419px;width:114px;height:17px;line-height:19px;text-align:left;padding-left:3px;">SDL-BM-0925-005</div>
<div class="c" style="left:270px;top:419px;width:70px;height:17px;line-height:19px;text-align:left;padding-left:3px;">4000.01</div>
<div class="c" style="left:340px;top:419px;width:78px;height:17px;line-height:19px;text-align:left;padding-left:3px;">02/09/2025</div>
<div class="c" style="left:418px;top:419px;width:284px;height:17px;line-height:19px;text-align:left;padding-left:3px;">Dp Pak Dayat 2816</div>
<div class="c" style="left:702px;top:419px;width:133px;height:17px;line-height:19px;text-align:right;padding-right:6px;">2.200.000</div>
<div class="c" style="left:835px;top:419px;width:127px;height:17px;line-height:19px;text-align:right;padding-right:6px;">-</div>
<div class="c" style="left:962px;top:419px;width:130px;height:17px;line-height:19px;text-align:right;padding-right:2px;">14.131.015,00</div>
<div class="c" style="left:1207px;top:419px;width:114px;height:17px;line-height:19px;text-align:right;padding-right:6px;">2.200.000,00</div>
<div class="c" style="left:25px;top:436px;width:29px;height:17px;line-height:19px;text-align:right;padding-right:3px;">7</div>
<div class="c" style="left:54px;top:436px;width:34px;height:17px;line-height:19px;text-align:right;padding-right:2px;">9</div>
<div class="c" style="left:88px;top:436px;width:68px;height:17px;line-height:19px;text-align:left;padding-left:3px;">September</div>
<div class="c" style="left:156px;top:436px;width:114px;height:17px;line-height:19px;text-align:left;padding-left:3px;">SDL-BK-0925-002</div>
<div class="c" style="left:270px;top:436px;width:70px;height:17px;line-height:19px;text-align:left;padding-left:3px;">5100</div>
<svg style="left:271px;top:436px" width="6" height="6"><path d="M0 0 L6 0 L0 6Z" fill="#1e7b1e"/></svg>
<div class="c" style="left:340px;top:436px;width:78px;height:17px;line-height:19px;text-align:left;padding-left:3px;">02/09/2025</div>
<div class="c" style="left:418px;top:436px;width:284px;height:17px;line-height:19px;text-align:left;padding-left:3px;">Beli Plat Galvanil 1Mm, 7Lbr</div>
<div class="c" style="left:702px;top:436px;width:133px;height:17px;line-height:19px;text-align:right;padding-right:6px;">-</div>
<div class="c" style="left:835px;top:436px;width:127px;height:17px;line-height:19px;text-align:right;padding-right:6px;">2.835.000</div>
<div class="c" style="left:962px;top:436px;width:130px;height:17px;line-height:19px;text-align:right;padding-right:2px;">11.296.015,00</div>
<div class="c" style="left:1207px;top:436px;width:114px;height:17px;line-height:19px;text-align:right;padding-right:20px;">-</div>
<div class="c" style="left:25px;top:453px;width:29px;height:17px;line-height:19px;text-align:right;padding-right:3px;">8</div>
<div class="c" style="left:54px;top:453px;width:34px;height:17px;line-height:19px;text-align:right;padding-right:2px;">9</div>
<div class="c" style="left:88px;top:453px;width:68px;height:17px;line-height:19px;text-align:left;padding-left:3px;">September</div>
<div class="c" style="left:156px;top:453px;width:114px;height:17px;line-height:19px;text-align:left;padding-left:3px;">SDL-BK-0925-003</div>
<div class="c" style="left:270px;top:453px;width:70px;height:17px;line-height:19px;text-align:left;padding-left:3px;">2200</div>
<svg style="left:271px;top:453px" width="6" height="6"><path d="M0 0 L6 0 L0 6Z" fill="#1e7b1e"/></svg>
<div class="c" style="left:340px;top:453px;width:78px;height:17px;line-height:19px;text-align:left;padding-left:3px;">02/09/2025</div>
<div class="c" style="left:418px;top:453px;width:284px;height:17px;line-height:19px;text-align:left;padding-left:3px;">Bayar Utang Sdl Ke Djp</div>
<div class="c" style="left:702px;top:453px;width:133px;height:17px;line-height:19px;text-align:right;padding-right:6px;">-</div>
<div class="c" style="left:835px;top:453px;width:127px;height:17px;line-height:19px;text-align:right;padding-right:6px;">3.775.000</div>
<div class="c" style="left:962px;top:453px;width:130px;height:17px;line-height:19px;text-align:right;padding-right:2px;">7.521.015,00</div>
<div class="c" style="left:1207px;top:453px;width:114px;height:17px;line-height:19px;text-align:right;padding-right:20px;">-</div>
<div class="c" style="left:25px;top:470px;width:29px;height:17px;line-height:19px;text-align:right;padding-right:3px;">9</div>
<div class="c" style="left:54px;top:470px;width:34px;height:17px;line-height:19px;text-align:right;padding-right:2px;">9</div>
<div class="c" style="left:88px;top:470px;width:68px;height:17px;line-height:19px;text-align:left;padding-left:3px;">September</div>
<div class="c" style="left:156px;top:470px;width:114px;height:17px;line-height:19px;text-align:left;padding-left:3px;">SDL-BM-0925-006</div>
<div class="c" style="left:270px;top:470px;width:70px;height:17px;line-height:19px;text-align:left;padding-left:3px;">4000.01</div>
<div class="c" style="left:340px;top:470px;width:78px;height:17px;line-height:19px;text-align:left;padding-left:3px;">02/09/2025</div>
<div class="c" style="left:418px;top:470px;width:284px;height:17px;line-height:19px;text-align:left;padding-left:3px;">Pelunasan Pak Dayat 2816</div>
<div class="c" style="left:702px;top:470px;width:133px;height:17px;line-height:19px;text-align:right;padding-right:6px;">2.200.000</div>
<div class="c" style="left:835px;top:470px;width:127px;height:17px;line-height:19px;text-align:right;padding-right:6px;">-</div>
<div class="c" style="left:962px;top:470px;width:130px;height:17px;line-height:19px;text-align:right;padding-right:2px;">9.721.015,00</div>
<div class="c" style="left:1207px;top:470px;width:114px;height:17px;line-height:19px;text-align:right;padding-right:6px;">2.200.000,00</div>
<div class="c" style="left:25px;top:487px;width:29px;height:17px;line-height:19px;text-align:right;padding-right:3px;">10</div>
<div class="c" style="left:54px;top:487px;width:34px;height:17px;line-height:19px;text-align:right;padding-right:2px;">9</div>
<div class="c" style="left:88px;top:487px;width:68px;height:17px;line-height:19px;text-align:left;padding-left:3px;">September</div>
<div class="c" style="left:156px;top:487px;width:114px;height:17px;line-height:19px;text-align:left;padding-left:3px;">SDL-BM-0925-007</div>
<div class="c" style="left:270px;top:487px;width:70px;height:17px;line-height:19px;text-align:left;padding-left:3px;">4000.01</div>
<div class="c" style="left:340px;top:487px;width:78px;height:17px;line-height:19px;text-align:left;padding-left:3px;">03/09/2025</div>
<div class="c" style="left:418px;top:487px;width:284px;height:17px;line-height:19px;text-align:left;padding-left:3px;">Pak Hamdan 2824</div>
<div class="c" style="left:702px;top:487px;width:133px;height:17px;line-height:19px;text-align:right;padding-right:6px;">75.000</div>
<div class="c" style="left:835px;top:487px;width:127px;height:17px;line-height:19px;text-align:right;padding-right:6px;">-</div>
<div class="c" style="left:962px;top:487px;width:130px;height:17px;line-height:19px;text-align:right;padding-right:2px;">9.796.015,00</div>
<div class="c" style="left:1207px;top:487px;width:114px;height:17px;line-height:19px;text-align:right;padding-right:6px;">75.000,00</div>
<div style="position:absolute;left:340px;top:504px;width:622px;height:17px;background:#f4b084"></div>
<div class="c" style="left:25px;top:504px;width:29px;height:17px;line-height:19px;text-align:right;padding-right:3px;">11</div>
<div class="c" style="left:54px;top:504px;width:34px;height:17px;line-height:19px;text-align:right;padding-right:2px;">9</div>
<div class="c" style="left:88px;top:504px;width:68px;height:17px;line-height:19px;text-align:left;padding-left:3px;">September</div>
<div class="c" style="left:156px;top:504px;width:114px;height:17px;line-height:19px;text-align:left;padding-left:3px;">SDL-BK-0925-004</div>
<div class="c" style="left:270px;top:504px;width:70px;height:17px;line-height:19px;text-align:left;padding-left:3px;">ayat silang</div>
<div class="c" style="left:340px;top:504px;width:78px;height:17px;line-height:19px;text-align:left;padding-left:3px;">04/09/2025</div>
<div class="c" style="left:418px;top:504px;width:284px;height:17px;line-height:19px;text-align:left;padding-left:3px;">Tarik Tunai untuk kas</div>
<div class="c" style="left:702px;top:504px;width:133px;height:17px;line-height:19px;text-align:right;padding-right:6px;"></div>
<div class="c" style="left:835px;top:504px;width:127px;height:17px;line-height:19px;text-align:right;padding-right:6px;">3.000.000</div>
<div class="c" style="left:962px;top:504px;width:130px;height:17px;line-height:19px;text-align:right;padding-right:2px;">6.796.015,00</div>
<div class="c" style="left:1207px;top:504px;width:114px;height:17px;line-height:19px;text-align:right;padding-right:20px;">-</div>
<div class="c" style="left:25px;top:521px;width:29px;height:17px;line-height:19px;text-align:right;padding-right:3px;">12</div>
<div class="c" style="left:54px;top:521px;width:34px;height:17px;line-height:19px;text-align:right;padding-right:2px;">9</div>
<div class="c" style="left:88px;top:521px;width:68px;height:17px;line-height:19px;text-align:left;padding-left:3px;">September</div>
<div class="c" style="left:156px;top:521px;width:114px;height:17px;line-height:19px;text-align:left;padding-left:3px;">SDL-BK-0925-005</div>
<div class="c" style="left:270px;top:521px;width:70px;height:17px;line-height:19px;text-align:left;padding-left:3px;">6201.01</div>
<div class="c" style="left:340px;top:521px;width:78px;height:17px;line-height:19px;text-align:left;padding-left:3px;">06/09/2025</div>
<div class="c" style="left:418px;top:521px;width:284px;height:17px;line-height:19px;text-align:left;padding-left:3px;">Kasbon Mingguan Riski</div>
<div class="c" style="left:702px;top:521px;width:133px;height:17px;line-height:19px;text-align:right;padding-right:6px;">-</div>
<div class="c" style="left:835px;top:521px;width:127px;height:17px;line-height:19px;text-align:right;padding-right:6px;">2.200.000</div>
<div class="c" style="left:962px;top:521px;width:130px;height:17px;line-height:19px;text-align:right;padding-right:2px;">4.596.015,00</div>
<div class="c" style="left:1207px;top:521px;width:114px;height:17px;line-height:19px;text-align:right;padding-right:20px;">-</div>
<div class="c" style="left:25px;top:538px;width:29px;height:17px;line-height:19px;text-align:right;padding-right:3px;">13</div>
<div class="c" style="left:54px;top:538px;width:34px;height:17px;line-height:19px;text-align:right;padding-right:2px;">9</div>
<div class="c" style="left:88px;top:538px;width:68px;height:17px;line-height:19px;text-align:left;padding-left:3px;">September</div>
<div class="c" style="left:156px;top:538px;width:114px;height:17px;line-height:19px;text-align:left;padding-left:3px;">SDL-BK-0925-006</div>
<div class="c" style="left:270px;top:538px;width:70px;height:17px;line-height:19px;text-align:left;padding-left:3px;">6201.01</div>
<div class="c" style="left:340px;top:538px;width:78px;height:17px;line-height:19px;text-align:left;padding-left:3px;">06/09/2025</div>
<div class="c" style="left:418px;top:538px;width:284px;height:17px;line-height:19px;text-align:left;padding-left:3px;">Kasbon Mingguan Subro</div>
<div class="c" style="left:702px;top:538px;width:133px;height:17px;line-height:19px;text-align:right;padding-right:6px;">-</div>
<div class="c" style="left:835px;top:538px;width:127px;height:17px;line-height:19px;text-align:right;padding-right:6px;">600.000</div>
<div class="c" style="left:962px;top:538px;width:130px;height:17px;line-height:19px;text-align:right;padding-right:2px;">3.996.015,00</div>
<div class="c" style="left:1207px;top:538px;width:114px;height:17px;line-height:19px;text-align:right;padding-right:20px;">-</div>
<div class="c" style="left:25px;top:555px;width:29px;height:17px;line-height:19px;text-align:right;padding-right:3px;">14</div>
<div class="c" style="left:54px;top:555px;width:34px;height:17px;line-height:19px;text-align:right;padding-right:2px;">9</div>
<div class="c" style="left:88px;top:555px;width:68px;height:17px;line-height:19px;text-align:left;padding-left:3px;">September</div>
<div class="c" style="left:156px;top:555px;width:114px;height:17px;line-height:19px;text-align:left;padding-left:3px;">SDL-BK-0925-007</div>
<div class="c" style="left:270px;top:555px;width:70px;height:17px;line-height:19px;text-align:left;padding-left:3px;">6201.01</div>
<div class="c" style="left:340px;top:555px;width:78px;height:17px;line-height:19px;text-align:left;padding-left:3px;">06/09/2025</div>
<div class="c" style="left:418px;top:555px;width:284px;height:17px;line-height:19px;text-align:left;padding-left:3px;">Kasbon Mingguan Anggi</div>
<div class="c" style="left:702px;top:555px;width:133px;height:17px;line-height:19px;text-align:right;padding-right:6px;">-</div>
<div class="c" style="left:835px;top:555px;width:127px;height:17px;line-height:19px;text-align:right;padding-right:6px;">1.500.000</div>
<div class="c" style="left:962px;top:555px;width:130px;height:17px;line-height:19px;text-align:right;padding-right:2px;">2.496.015,00</div>
<div class="c" style="left:1207px;top:555px;width:114px;height:17px;line-height:19px;text-align:right;padding-right:20px;">-</div>
<div class="c" style="left:25px;top:572px;width:29px;height:17px;line-height:19px;text-align:right;padding-right:3px;">15</div>
<div class="c" style="left:54px;top:572px;width:34px;height:17px;line-height:19px;text-align:right;padding-right:2px;">9</div>
<div class="c" style="left:88px;top:572px;width:68px;height:17px;line-height:19px;text-align:left;padding-left:3px;">September</div>
<div class="c" style="left:156px;top:572px;width:114px;height:17px;line-height:19px;text-align:left;padding-left:3px;">SDL-BK-0925-008</div>
<div class="c" style="left:270px;top:572px;width:70px;height:17px;line-height:19px;text-align:left;padding-left:3px;">7200.02</div>
<div class="c" style="left:340px;top:572px;width:78px;height:17px;line-height:19px;text-align:left;padding-left:3px;">06/09/2025</div>
<div class="c" style="left:418px;top:572px;width:284px;height:17px;line-height:19px;text-align:left;padding-left:3px;">Biaya Admin</div>
<div class="c" style="left:702px;top:572px;width:133px;height:17px;line-height:19px;text-align:right;padding-right:6px;">-</div>
<div class="c" style="left:835px;top:572px;width:127px;height:17px;line-height:19px;text-align:right;padding-right:6px;">2.500</div>
<div class="c" style="left:962px;top:572px;width:130px;height:17px;line-height:19px;text-align:right;padding-right:2px;">2.493.515,00</div>
<div class="c" style="left:1207px;top:572px;width:114px;height:17px;line-height:19px;text-align:right;padding-right:20px;">-</div>
<div class="c" style="left:25px;top:589px;width:29px;height:17px;line-height:19px;text-align:right;padding-right:3px;">16</div>
<div class="c" style="left:54px;top:589px;width:34px;height:17px;line-height:19px;text-align:right;padding-right:2px;">9</div>
<div class="c" style="left:88px;top:589px;width:68px;height:17px;line-height:19px;text-align:left;padding-left:3px;">September</div>
<div class="c" style="left:156px;top:589px;width:114px;height:17px;line-height:19px;text-align:left;padding-left:3px;">SDL-BM-0925-008</div>
<div class="c" style="left:270px;top:589px;width:70px;height:17px;line-height:19px;text-align:left;padding-left:3px;">4000.01</div>
<div class="c" style="left:340px;top:589px;width:78px;height:17px;line-height:19px;text-align:left;padding-left:3px;">08/09/2025</div>
<div class="c" style="left:418px;top:589px;width:284px;height:17px;line-height:19px;text-align:left;padding-left:3px;">Pak Juna 2830</div>
<div class="c" style="left:702px;top:589px;width:133px;height:17px;line-height:19px;text-align:right;padding-right:6px;">460.000</div>
<div class="c" style="left:835px;top:589px;width:127px;height:17px;line-height:19px;text-align:right;padding-right:6px;">-</div>
<div class="c" style="left:962px;top:589px;width:130px;height:17px;line-height:19px;text-align:right;padding-right:2px;">2.953.515,00</div>
<div class="c" style="left:1207px;top:589px;width:114px;height:17px;line-height:19px;text-align:right;padding-right:6px;">460.000,00</div>
<div class="c" style="left:25px;top:606px;width:29px;height:17px;line-height:19px;text-align:right;padding-right:3px;">17</div>
<div class="c" style="left:54px;top:606px;width:34px;height:17px;line-height:19px;text-align:right;padding-right:2px;">9</div>
<div class="c" style="left:88px;top:606px;width:68px;height:17px;line-height:19px;text-align:left;padding-left:3px;">September</div>
<div class="c" style="left:156px;top:606px;width:114px;height:17px;line-height:19px;text-align:left;padding-left:3px;">SDL-BK-0925-009</div>
<div class="c" style="left:270px;top:606px;width:70px;height:17px;line-height:19px;text-align:left;padding-left:3px;">6203.04</div>
<div class="c" style="left:340px;top:606px;width:78px;height:17px;line-height:19px;text-align:left;padding-left:3px;">08/09/2025</div>
<div class="c" style="left:418px;top:606px;width:284px;height:17px;line-height:19px;text-align:left;padding-left:3px;">Bayar Pembuatan Cv</div>
<div class="c" style="left:702px;top:606px;width:133px;height:17px;line-height:19px;text-align:right;padding-right:6px;">-</div>
<div class="c" style="left:835px;top:606px;width:127px;height:17px;line-height:19px;text-align:right;padding-right:6px;">2.500.000</div>
<div class="c" style="left:962px;top:606px;width:130px;height:17px;line-height:19px;text-align:right;padding-right:2px;">453.515,00</div>
<div class="c" style="left:1207px;top:606px;width:114px;height:17px;line-height:19px;text-align:right;padding-right:20px;">-</div>
<div class="c" style="left:25px;top:623px;width:29px;height:17px;line-height:19px;text-align:right;padding-right:3px;">18</div>
<div class="c" style="left:54px;top:623px;width:34px;height:17px;line-height:19px;text-align:right;padding-right:2px;">9</div>
<div class="c" style="left:88px;top:623px;width:68px;height:17px;line-height:19px;text-align:left;padding-left:3px;">September</div>
<div class="c" style="left:156px;top:623px;width:114px;height:17px;line-height:19px;text-align:left;padding-left:3px;">SDL-BM-0925-009</div>
<div class="c" style="left:270px;top:623px;width:70px;height:17px;line-height:19px;text-align:left;padding-left:3px;">4000.01</div>
<div class="c" style="left:340px;top:623px;width:78px;height:17px;line-height:19px;text-align:left;padding-left:3px;">08/09/2025</div>
<div class="c" style="left:418px;top:623px;width:284px;height:17px;line-height:19px;text-align:left;padding-left:3px;">Cicilan Laser Sentosa Abadi</div>
<div class="c" style="left:702px;top:623px;width:133px;height:17px;line-height:19px;text-align:right;padding-right:6px;">4.695.000</div>
<div class="c" style="left:835px;top:623px;width:127px;height:17px;line-height:19px;text-align:right;padding-right:6px;">-</div>
<div class="c" style="left:962px;top:623px;width:130px;height:17px;line-height:19px;text-align:right;padding-right:2px;">5.148.515,00</div>
<div class="c" style="left:1207px;top:623px;width:114px;height:17px;line-height:19px;text-align:right;padding-right:6px;">4.695.000,00</div>
<div class="c" style="left:25px;top:640px;width:29px;height:17px;line-height:19px;text-align:right;padding-right:3px;">19</div>
<div class="c" style="left:54px;top:640px;width:34px;height:17px;line-height:19px;text-align:right;padding-right:2px;">9</div>
<div class="c" style="left:88px;top:640px;width:68px;height:17px;line-height:19px;text-align:left;padding-left:3px;">September</div>
<div class="c" style="left:156px;top:640px;width:114px;height:17px;line-height:19px;text-align:left;padding-left:3px;">SDL-BM-0925-010</div>
<div class="c" style="left:270px;top:640px;width:70px;height:17px;line-height:19px;text-align:left;padding-left:3px;">4000.01</div>
<div class="c" style="left:340px;top:640px;width:78px;height:17px;line-height:19px;text-align:left;padding-left:3px;">08/09/2025</div>
<div class="c" style="left:418px;top:640px;width:284px;height:17px;line-height:19px;text-align:left;padding-left:3px;">Pak Yos 2833</div>
<div class="c" style="left:702px;top:640px;width:133px;height:17px;line-height:19px;text-align:right;padding-right:6px;">150.000</div>
<div class="c" style="left:835px;top:640px;width:127px;height:17px;line-height:19px;text-align:right;padding-right:6px;">-</div>
<div class="c" style="left:962px;top:640px;width:130px;height:17px;line-height:19px;text-align:right;padding-right:2px;">5.298.515,00</div>
<div class="c" style="left:1207px;top:640px;width:114px;height:17px;line-height:19px;text-align:right;padding-right:6px;">150.000,00</div>
<div class="c" style="left:25px;top:657px;width:29px;height:17px;line-height:19px;text-align:right;padding-right:3px;">20</div>
<div class="c" style="left:54px;top:657px;width:34px;height:17px;line-height:19px;text-align:right;padding-right:2px;">9</div>
<div class="c" style="left:88px;top:657px;width:68px;height:17px;line-height:19px;text-align:left;padding-left:3px;">September</div>
<div class="c" style="left:156px;top:657px;width:114px;height:17px;line-height:19px;text-align:left;padding-left:3px;">SDL-BK-0925-010</div>
<div class="c" style="left:270px;top:657px;width:70px;height:17px;line-height:19px;text-align:left;padding-left:3px;">5100</div>
<svg style="left:271px;top:657px" width="6" height="6"><path d="M0 0 L6 0 L0 6Z" fill="#1e7b1e"/></svg>
<div class="c" style="left:340px;top:657px;width:78px;height:17px;line-height:19px;text-align:left;padding-left:3px;">09/09/2025</div>
<div class="c" style="left:418px;top:657px;width:284px;height:17px;line-height:19px;text-align:left;padding-left:3px;">Beli Plat Ss Hl 0.8Mm, 1Lbr</div>
<div class="c" style="left:702px;top:657px;width:133px;height:17px;line-height:19px;text-align:right;padding-right:6px;">-</div>
<div class="c" style="left:835px;top:657px;width:127px;height:17px;line-height:19px;text-align:right;padding-right:6px;">835.000</div>
<div class="c" style="left:962px;top:657px;width:130px;height:17px;line-height:19px;text-align:right;padding-right:2px;">4.463.515,00</div>
<div class="c" style="left:1207px;top:657px;width:114px;height:17px;line-height:19px;text-align:right;padding-right:20px;">-</div>
<div class="c" style="left:25px;top:674px;width:29px;height:17px;line-height:19px;text-align:right;padding-right:3px;">21</div>
<div class="c" style="left:54px;top:674px;width:34px;height:17px;line-height:19px;text-align:right;padding-right:2px;">9</div>
<div class="c" style="left:88px;top:674px;width:68px;height:17px;line-height:19px;text-align:left;padding-left:3px;">September</div>
<div class="c" style="left:156px;top:674px;width:114px;height:17px;line-height:19px;text-align:left;padding-left:3px;">SDL-BM-0925-011</div>
<div class="c" style="left:270px;top:674px;width:70px;height:17px;line-height:19px;text-align:left;padding-left:3px;">4000.01</div>
<div class="c" style="left:340px;top:674px;width:78px;height:17px;line-height:19px;text-align:left;padding-left:3px;">09/09/2025</div>
<div class="c" style="left:418px;top:674px;width:284px;height:17px;line-height:19px;text-align:left;padding-left:3px;">Pak Yudo 2837</div>
<div class="c" style="left:702px;top:674px;width:133px;height:17px;line-height:19px;text-align:right;padding-right:6px;">1.500.000</div>
<div class="c" style="left:835px;top:674px;width:127px;height:17px;line-height:19px;text-align:right;padding-right:6px;">-</div>
<div class="c" style="left:962px;top:674px;width:130px;height:17px;line-height:19px;text-align:right;padding-right:2px;">5.963.515,00</div>
<div class="c" style="left:1207px;top:674px;width:114px;height:17px;line-height:19px;text-align:right;padding-right:6px;">1.500.000,00</div>
<div class="c" style="left:25px;top:691px;width:29px;height:17px;line-height:19px;text-align:right;padding-right:3px;">22</div>
<div class="c" style="left:54px;top:691px;width:34px;height:17px;line-height:19px;text-align:right;padding-right:2px;">9</div>
<div class="c" style="left:88px;top:691px;width:68px;height:17px;line-height:19px;text-align:left;padding-left:3px;">September</div>
<div class="c" style="left:156px;top:691px;width:114px;height:17px;line-height:19px;text-align:left;padding-left:3px;">SDL-BM-0925-012</div>
<div class="c" style="left:270px;top:691px;width:70px;height:17px;line-height:19px;text-align:left;padding-left:3px;">4000.01</div>
<div class="c" style="left:340px;top:691px;width:78px;height:17px;line-height:19px;text-align:left;padding-left:3px;">10/09/2025</div>
<div class="c" style="left:418px;top:691px;width:284px;height:17px;line-height:19px;text-align:left;padding-left:3px;">Pak Rizal 2846</div>
<div class="c" style="left:702px;top:691px;width:133px;height:17px;line-height:19px;text-align:right;padding-right:6px;">200.000</div>
<div class="c" style="left:835px;top:691px;width:127px;height:17px;line-height:19px;text-align:right;padding-right:6px;">-</div>
<div class="c" style="left:962px;top:691px;width:130px;height:17px;line-height:19px;text-align:right;padding-right:2px;">6.163.515,00</div>
<div class="c" style="left:1207px;top:691px;width:114px;height:17px;line-height:19px;text-align:right;padding-right:6px;">200.000,00</div>
<div class="c" style="left:25px;top:708px;width:29px;height:17px;line-height:19px;text-align:right;padding-right:3px;">23</div>
<div class="c" style="left:54px;top:708px;width:34px;height:17px;line-height:19px;text-align:right;padding-right:2px;">9</div>
<div class="c" style="left:88px;top:708px;width:68px;height:17px;line-height:19px;text-align:left;padding-left:3px;">September</div>
<div class="c" style="left:156px;top:708px;width:114px;height:17px;line-height:19px;text-align:left;padding-left:3px;">SDL-BK-0925-011</div>
<div class="c" style="left:270px;top:708px;width:70px;height:17px;line-height:19px;text-align:left;padding-left:3px;">5100</div>
<svg style="left:271px;top:708px" width="6" height="6"><path d="M0 0 L6 0 L0 6Z" fill="#1e7b1e"/></svg>
<div class="c" style="left:340px;top:708px;width:78px;height:17px;line-height:19px;text-align:left;padding-left:3px;">11/09/2025</div>
<div class="c" style="left:418px;top:708px;width:284px;height:17px;line-height:19px;text-align:left;padding-left:3px;">Beli Plat Besi 2Mm,1Lbr</div>
<div class="c" style="left:702px;top:708px;width:133px;height:17px;line-height:19px;text-align:right;padding-right:6px;">-</div>
<div class="c" style="left:835px;top:708px;width:127px;height:17px;line-height:19px;text-align:right;padding-right:6px;">535.000</div>
<div class="c" style="left:962px;top:708px;width:130px;height:17px;line-height:19px;text-align:right;padding-right:2px;">5.628.515,00</div>
<div class="c" style="left:1207px;top:708px;width:114px;height:17px;line-height:19px;text-align:right;padding-right:20px;">-</div>
<div class="c" style="left:25px;top:725px;width:29px;height:17px;line-height:19px;text-align:right;padding-right:3px;">24</div>
<div class="c" style="left:54px;top:725px;width:34px;height:17px;line-height:19px;text-align:right;padding-right:2px;">9</div>
<div class="c" style="left:88px;top:725px;width:68px;height:17px;line-height:19px;text-align:left;padding-left:3px;">September</div>
<div class="c" style="left:156px;top:725px;width:114px;height:17px;line-height:19px;text-align:left;padding-left:3px;">SDL-BK-0925-012</div>
<div class="c" style="left:270px;top:725px;width:70px;height:17px;line-height:19px;text-align:left;padding-left:3px;">5100</div>
<svg style="left:271px;top:725px" width="6" height="6"><path d="M0 0 L6 0 L0 6Z" fill="#1e7b1e"/></svg>
<div class="c" style="left:340px;top:725px;width:78px;height:17px;line-height:19px;text-align:left;padding-left:3px;">11/09/2025</div>
<div class="c" style="left:418px;top:725px;width:284px;height:17px;line-height:19px;text-align:left;padding-left:3px;">Bayar Mdf Ke Grapica</div>
<div class="c" style="left:702px;top:725px;width:133px;height:17px;line-height:19px;text-align:right;padding-right:6px;">-</div>
<div class="c" style="left:835px;top:725px;width:127px;height:17px;line-height:19px;text-align:right;padding-right:6px;">570.000</div>
<div class="c" style="left:962px;top:725px;width:130px;height:17px;line-height:19px;text-align:right;padding-right:2px;">5.058.515,00</div>
<div class="c" style="left:1207px;top:725px;width:114px;height:17px;line-height:19px;text-align:right;padding-right:20px;">-</div>
<div class="c" style="left:25px;top:742px;width:29px;height:17px;line-height:19px;text-align:right;padding-right:3px;">25</div>
<div class="c" style="left:54px;top:742px;width:34px;height:17px;line-height:19px;text-align:right;padding-right:2px;">9</div>
<div class="c" style="left:88px;top:742px;width:68px;height:17px;line-height:19px;text-align:left;padding-left:3px;">September</div>
<div class="c" style="left:156px;top:742px;width:114px;height:17px;line-height:19px;text-align:left;padding-left:3px;">SDL-BM-0925-013</div>
<div class="c" style="left:270px;top:742px;width:70px;height:17px;line-height:19px;text-align:left;padding-left:3px;">4000.01</div>
<div class="c" style="left:340px;top:742px;width:78px;height:17px;line-height:19px;text-align:left;padding-left:3px;">11/09/2025</div>
<div class="c" style="left:418px;top:742px;width:284px;height:17px;line-height:19px;text-align:left;padding-left:3px;">Pak Andri Irawan 2851</div>
<div class="c" style="left:702px;top:742px;width:133px;height:17px;line-height:19px;text-align:right;padding-right:6px;">1.100.000</div>
<div class="c" style="left:835px;top:742px;width:127px;height:17px;line-height:19px;text-align:right;padding-right:6px;">-</div>
<div class="c" style="left:962px;top:742px;width:130px;height:17px;line-height:19px;text-align:right;padding-right:2px;">6.158.515,00</div>
<div class="c" style="left:1207px;top:742px;width:114px;height:17px;line-height:19px;text-align:right;padding-right:6px;">1.100.000,00</div>
<div class="c" style="left:25px;top:759px;width:29px;height:17px;line-height:19px;text-align:right;padding-right:3px;">26</div>
<div class="c" style="left:54px;top:759px;width:34px;height:17px;line-height:19px;text-align:right;padding-right:2px;">9</div>
<div class="c" style="left:88px;top:759px;width:68px;height:17px;line-height:19px;text-align:left;padding-left:3px;">September</div>
<div class="c" style="left:156px;top:759px;width:114px;height:17px;line-height:19px;text-align:left;padding-left:3px;">SDL-BM-0925-014</div>
<div class="c" style="left:270px;top:759px;width:70px;height:17px;line-height:19px;text-align:left;padding-left:3px;">4000.01</div>
<div class="c" style="left:340px;top:759px;width:78px;height:17px;line-height:19px;text-align:left;padding-left:3px;">12/09/2025</div>
<div class="c" style="left:418px;top:759px;width:284px;height:17px;line-height:19px;text-align:left;padding-left:3px;">Pak Rizal 2846</div>
<div class="c" style="left:702px;top:759px;width:133px;height:17px;line-height:19px;text-align:right;padding-right:6px;">10.000</div>
<div class="c" style="left:835px;top:759px;width:127px;height:17px;line-height:19px;text-align:right;padding-right:6px;">-</div>
<div class="c" style="left:962px;top:759px;width:130px;height:17px;line-height:19px;text-align:right;padding-right:2px;">6.168.515,00</div>
<div class="c" style="left:1207px;top:759px;width:114px;height:17px;line-height:19px;text-align:right;padding-right:6px;">10.000,00</div>
<div class="c" style="left:25px;top:776px;width:29px;height:17px;line-height:19px;text-align:right;padding-right:3px;">27</div>
<div class="c" style="left:54px;top:776px;width:34px;height:17px;line-height:19px;text-align:right;padding-right:2px;">9</div>
<div class="c" style="left:88px;top:776px;width:68px;height:17px;line-height:19px;text-align:left;padding-left:3px;">September</div>
<div class="c" style="left:156px;top:776px;width:114px;height:17px;line-height:19px;text-align:left;padding-left:3px;">SDL-BK-0925-013</div>
<div class="c" style="left:270px;top:776px;width:70px;height:17px;line-height:19px;text-align:left;padding-left:3px;">5100</div>
<svg style="left:271px;top:776px" width="6" height="6"><path d="M0 0 L6 0 L0 6Z" fill="#1e7b1e"/></svg>
<div class="c" style="left:340px;top:776px;width:78px;height:17px;line-height:19px;text-align:left;padding-left:3px;">16/09/2025</div>
<div class="c" style="left:418px;top:776px;width:284px;height:17px;line-height:19px;text-align:left;padding-left:3px;">Beli Plat Galvanil 1,5Mm, 1Lbr</div>
<div class="c" style="left:702px;top:776px;width:133px;height:17px;line-height:19px;text-align:right;padding-right:6px;">-</div>
<div class="c" style="left:835px;top:776px;width:127px;height:17px;line-height:19px;text-align:right;padding-right:6px;">1.038.000</div>
<div class="c" style="left:962px;top:776px;width:130px;height:17px;line-height:19px;text-align:right;padding-right:2px;">5.130.515,00</div>
<div class="c" style="left:1207px;top:776px;width:114px;height:17px;line-height:19px;text-align:right;padding-right:20px;">-</div>
<div class="c" style="left:25px;top:793px;width:29px;height:17px;line-height:19px;text-align:right;padding-right:3px;">28</div>
<div class="c" style="left:54px;top:793px;width:34px;height:17px;line-height:19px;text-align:right;padding-right:2px;">9</div>
<div class="c" style="left:88px;top:793px;width:68px;height:17px;line-height:19px;text-align:left;padding-left:3px;">September</div>
<div class="c" style="left:156px;top:793px;width:114px;height:17px;line-height:19px;text-align:left;padding-left:3px;">SDL-BM-0925-015</div>
<div class="c" style="left:270px;top:793px;width:70px;height:17px;line-height:19px;text-align:left;padding-left:3px;">4000.01</div>
<div class="c" style="left:340px;top:793px;width:78px;height:17px;line-height:19px;text-align:left;padding-left:3px;">19/09/2025</div>
<div class="c" style="left:418px;top:793px;width:284px;height:17px;line-height:19px;text-align:left;padding-left:3px;">Pak Isman 2867</div>
<div class="c" style="left:702px;top:793px;width:133px;height:17px;line-height:19px;text-align:right;padding-right:6px;">1.450.000</div>
<div class="c" style="left:835px;top:793px;width:127px;height:17px;line-height:19px;text-align:right;padding-right:6px;">-</div>
<div class="c" style="left:962px;top:793px;width:130px;height:17px;line-height:19px;text-align:right;padding-right:2px;">6.580.515,00</div>
<div class="c" style="left:1207px;top:793px;width:114px;height:17px;line-height:19px;text-align:right;padding-right:6px;">1.450.000,00</div>
<div class="c" style="left:25px;top:810px;width:29px;height:17px;line-height:19px;text-align:right;padding-right:3px;">29</div>
<div class="c" style="left:54px;top:810px;width:34px;height:17px;line-height:19px;text-align:right;padding-right:2px;">9</div>
<div class="c" style="left:88px;top:810px;width:68px;height:17px;line-height:19px;text-align:left;padding-left:3px;">September</div>
<div class="c" style="left:156px;top:810px;width:114px;height:17px;line-height:19px;text-align:left;padding-left:3px;">SDL-BM-0925-016</div>
<div class="c" style="left:270px;top:810px;width:70px;height:17px;line-height:19px;text-align:left;padding-left:3px;">4000.01</div>
<div class="c" style="left:340px;top:810px;width:78px;height:17px;line-height:19px;text-align:left;padding-left:3px;">19/09/2025</div>
<div class="c" style="left:418px;top:810px;width:284px;height:17px;line-height:19px;text-align:left;padding-left:3px;">Sentosa Abadi Bln Agustus 25</div>
<div class="c" style="left:702px;top:810px;width:133px;height:17px;line-height:19px;text-align:right;padding-right:6px;">1.050.000</div>
<div class="c" style="left:835px;top:810px;width:127px;height:17px;line-height:19px;text-align:right;padding-right:6px;">-</div>
<div class="c" style="left:962px;top:810px;width:130px;height:17px;line-height:19px;text-align:right;padding-right:2px;">7.630.515,00</div>
<div class="c" style="left:1207px;top:810px;width:114px;height:17px;line-height:19px;text-align:right;padding-right:6px;">1.050.000,00</div>
<div class="c" style="left:25px;top:827px;width:29px;height:17px;line-height:19px;text-align:right;padding-right:3px;">30</div>
<div class="c" style="left:54px;top:827px;width:34px;height:17px;line-height:19px;text-align:right;padding-right:2px;">9</div>
<div class="c" style="left:88px;top:827px;width:68px;height:17px;line-height:19px;text-align:left;padding-left:3px;">September</div>
<div class="c" style="left:156px;top:827px;width:114px;height:17px;line-height:19px;text-align:left;padding-left:3px;">SDL-BK-0925-014</div>
<div class="c" style="left:270px;top:827px;width:70px;height:17px;line-height:19px;text-align:left;padding-left:3px;">5100</div>
<svg style="left:271px;top:827px" width="6" height="6"><path d="M0 0 L6 0 L0 6Z" fill="#1e7b1e"/></svg>
<div class="c" style="left:340px;top:827px;width:78px;height:17px;line-height:19px;text-align:left;padding-left:3px;">22/09/2025</div>
<div class="c" style="left:418px;top:827px;width:284px;height:17px;line-height:19px;text-align:left;padding-left:3px;">Beli Plat Besi 2Mm,1Lbr</div>
<div class="c" style="left:702px;top:827px;width:133px;height:17px;line-height:19px;text-align:right;padding-right:6px;">-</div>
<div class="c" style="left:835px;top:827px;width:127px;height:17px;line-height:19px;text-align:right;padding-right:6px;">535.000</div>
<div class="c" style="left:962px;top:827px;width:130px;height:17px;line-height:19px;text-align:right;padding-right:2px;">7.095.515,00</div>
<div class="c" style="left:1207px;top:827px;width:114px;height:17px;line-height:19px;text-align:right;padding-right:20px;">-</div>
<div style="position:absolute;left:340px;top:844px;width:622px;height:17px;background:#f4b084"></div>
<div class="c" style="left:25px;top:844px;width:29px;height:17px;line-height:19px;text-align:right;padding-right:3px;">31</div>
<div class="c" style="left:54px;top:844px;width:34px;height:17px;line-height:19px;text-align:right;padding-right:2px;">9</div>
<div class="c" style="left:88px;top:844px;width:68px;height:17px;line-height:19px;text-align:left;padding-left:3px;">September</div>
<div class="c" style="left:156px;top:844px;width:114px;height:17px;line-height:19px;text-align:left;padding-left:3px;">SDL-BK-0925-015</div>
<div class="c" style="left:270px;top:844px;width:70px;height:17px;line-height:19px;text-align:left;padding-left:3px;">ayat silang</div>
<div class="c" style="left:340px;top:844px;width:78px;height:17px;line-height:19px;text-align:left;padding-left:3px;">22/09/2025</div>
<div class="c" style="left:418px;top:844px;width:284px;height:17px;line-height:19px;text-align:left;padding-left:3px;">Tarik Tunai untuk kas</div>
<div class="c" style="left:702px;top:844px;width:133px;height:17px;line-height:19px;text-align:right;padding-right:6px;"></div>
<div class="c" style="left:835px;top:844px;width:127px;height:17px;line-height:19px;text-align:right;padding-right:6px;">2.000.000</div>
<div class="c" style="left:962px;top:844px;width:130px;height:17px;line-height:19px;text-align:right;padding-right:2px;">5.095.515,00</div>
<div class="c" style="left:1207px;top:844px;width:114px;height:17px;line-height:19px;text-align:right;padding-right:20px;">-</div>
<div class="c" style="left:25px;top:861px;width:29px;height:17px;line-height:19px;text-align:right;padding-right:3px;">32</div>
<div class="c" style="left:54px;top:861px;width:34px;height:17px;line-height:19px;text-align:right;padding-right:2px;">9</div>
<div class="c" style="left:88px;top:861px;width:68px;height:17px;line-height:19px;text-align:left;padding-left:3px;">September</div>
<div class="c" style="left:156px;top:861px;width:114px;height:17px;line-height:19px;text-align:left;padding-left:3px;">SDL-BM-0925-017</div>
<div class="c" style="left:270px;top:861px;width:70px;height:17px;line-height:19px;text-align:left;padding-left:3px;">4000.01</div>
<div class="c" style="left:340px;top:861px;width:78px;height:17px;line-height:19px;text-align:left;padding-left:3px;">24/09/2025</div>
<div class="c" style="left:418px;top:861px;width:284px;height:17px;line-height:19px;text-align:left;padding-left:3px;">Pak Madi 2878</div>
<div class="c" style="left:702px;top:861px;width:133px;height:17px;line-height:19px;text-align:right;padding-right:6px;">350.000</div>
<div class="c" style="left:835px;top:861px;width:127px;height:17px;line-height:19px;text-align:right;padding-right:6px;">-</div>
<div class="c" style="left:962px;top:861px;width:130px;height:17px;line-height:19px;text-align:right;padding-right:2px;">5.445.515,00</div>
<div class="c" style="left:1207px;top:861px;width:114px;height:17px;line-height:19px;text-align:right;padding-right:6px;">350.000,00</div>
<div class="c" style="left:25px;top:878px;width:29px;height:17px;line-height:19px;text-align:right;padding-right:3px;">33</div>
<div class="c" style="left:54px;top:878px;width:34px;height:17px;line-height:19px;text-align:right;padding-right:2px;">9</div>
<div class="c" style="left:88px;top:878px;width:68px;height:17px;line-height:19px;text-align:left;padding-left:3px;">September</div>
<div class="c" style="left:156px;top:878px;width:114px;height:17px;line-height:19px;text-align:left;padding-left:3px;">SDL-BM-0925-018</div>
<div class="c" style="left:270px;top:878px;width:70px;height:17px;line-height:19px;text-align:left;padding-left:3px;">4000.01</div>
<div class="c" style="left:340px;top:878px;width:78px;height:17px;line-height:19px;text-align:left;padding-left:3px;">24/09/2025</div>
<div class="c" style="left:418px;top:878px;width:284px;height:17px;line-height:19px;text-align:left;padding-left:3px;">Pak Juna 2877</div>
<div class="c" style="left:702px;top:878px;width:133px;height:17px;line-height:19px;text-align:right;padding-right:6px;">621.000</div>
<div class="c" style="left:835px;top:878px;width:127px;height:17px;line-height:19px;text-align:right;padding-right:6px;">-</div>
<div class="c" style="left:962px;top:878px;width:130px;height:17px;line-height:19px;text-align:right;padding-right:2px;">6.066.515,00</div>
<div class="c" style="left:1207px;top:878px;width:114px;height:17px;line-height:19px;text-align:right;padding-right:6px;">621.000,00</div>
<div class="c" style="left:25px;top:895px;width:29px;height:17px;line-height:19px;text-align:right;padding-right:3px;">34</div>
<div class="c" style="left:54px;top:895px;width:34px;height:17px;line-height:19px;text-align:right;padding-right:2px;">9</div>
<div class="c" style="left:88px;top:895px;width:68px;height:17px;line-height:19px;text-align:left;padding-left:3px;">September</div>
<div class="c" style="left:156px;top:895px;width:114px;height:17px;line-height:19px;text-align:left;padding-left:3px;">SDL-BM-0925-019</div>
<div class="c" style="left:270px;top:895px;width:70px;height:17px;line-height:19px;text-align:left;padding-left:3px;">4000.01</div>
<div class="c" style="left:340px;top:895px;width:78px;height:17px;line-height:19px;text-align:left;padding-left:3px;">25/09/2025</div>
<div class="c" style="left:418px;top:895px;width:284px;height:17px;line-height:19px;text-align:left;padding-left:3px;">Pak Tata</div>
<div class="c" style="left:702px;top:895px;width:133px;height:17px;line-height:19px;text-align:right;padding-right:6px;">3.000.000</div>
<div class="c" style="left:835px;top:895px;width:127px;height:17px;line-height:19px;text-align:right;padding-right:6px;">-</div>
<div class="c" style="left:962px;top:895px;width:130px;height:17px;line-height:19px;text-align:right;padding-right:2px;">9.066.515,00</div>
<div class="c" style="left:1207px;top:895px;width:114px;height:17px;line-height:19px;text-align:right;padding-right:6px;">3.000.000,00</div>
<div class="c" style="left:25px;top:912px;width:29px;height:17px;line-height:19px;text-align:right;padding-right:3px;">35</div>
<div class="c" style="left:54px;top:912px;width:34px;height:17px;line-height:19px;text-align:right;padding-right:2px;">9</div>
<div class="c" style="left:88px;top:912px;width:68px;height:17px;line-height:19px;text-align:left;padding-left:3px;">September</div>
<div class="c" style="left:156px;top:912px;width:114px;height:17px;line-height:19px;text-align:left;padding-left:3px;">SDL-BK-0925-016</div>
<div class="c" style="left:270px;top:912px;width:70px;height:17px;line-height:19px;text-align:left;padding-left:3px;">2300</div>
<svg style="left:271px;top:912px" width="6" height="6"><path d="M0 0 L6 0 L0 6Z" fill="#1e7b1e"/></svg>
<div class="c" style="left:340px;top:912px;width:78px;height:17px;line-height:19px;text-align:left;padding-left:3px;">26/09/2025</div>
<div class="c" style="left:418px;top:912px;width:284px;height:17px;line-height:19px;text-align:left;padding-left:3px;">Tarik Tunai</div>
<div class="c" style="left:702px;top:912px;width:133px;height:17px;line-height:19px;text-align:right;padding-right:6px;">-</div>
<div class="c" style="left:835px;top:912px;width:127px;height:17px;line-height:19px;text-align:right;padding-right:6px;">500.000</div>
<div class="c" style="left:962px;top:912px;width:130px;height:17px;line-height:19px;text-align:right;padding-right:2px;">8.566.515,00</div>
<div class="c" style="left:1207px;top:912px;width:114px;height:17px;line-height:19px;text-align:right;padding-right:20px;">-</div>
<div class="c" style="left:25px;top:929px;width:29px;height:17px;line-height:19px;text-align:right;padding-right:3px;">36</div>
<div class="c" style="left:54px;top:929px;width:34px;height:17px;line-height:19px;text-align:right;padding-right:2px;">9</div>
<div class="c" style="left:88px;top:929px;width:68px;height:17px;line-height:19px;text-align:left;padding-left:3px;">September</div>
<div class="c" style="left:156px;top:929px;width:114px;height:17px;line-height:19px;text-align:left;padding-left:3px;">SDL-BK-0925-017</div>
<div class="c" style="left:270px;top:929px;width:70px;height:17px;line-height:19px;text-align:left;padding-left:3px;">2300</div>
<svg style="left:271px;top:929px" width="6" height="6"><path d="M0 0 L6 0 L0 6Z" fill="#1e7b1e"/></svg>
<div class="c" style="left:340px;top:929px;width:78px;height:17px;line-height:19px;text-align:left;padding-left:3px;">27/09/2025</div>
<div class="c" style="left:418px;top:929px;width:284px;height:17px;line-height:19px;text-align:left;padding-left:3px;">Kasbon Mingguan Riski</div>
<div class="c" style="left:702px;top:929px;width:133px;height:17px;line-height:19px;text-align:right;padding-right:6px;">-</div>
<div class="c" style="left:835px;top:929px;width:127px;height:17px;line-height:19px;text-align:right;padding-right:6px;">1.500.000</div>
<div class="c" style="left:962px;top:929px;width:130px;height:17px;line-height:19px;text-align:right;padding-right:2px;">7.066.515,00</div>
<div class="c" style="left:1207px;top:929px;width:114px;height:17px;line-height:19px;text-align:right;padding-right:20px;">-</div>
<div class="c" style="left:25px;top:946px;width:29px;height:17px;line-height:19px;text-align:right;padding-right:3px;">37</div>
<div class="c" style="left:54px;top:946px;width:34px;height:17px;line-height:19px;text-align:right;padding-right:2px;">9</div>
<div class="c" style="left:88px;top:946px;width:68px;height:17px;line-height:19px;text-align:left;padding-left:3px;">September</div>
<div class="c" style="left:156px;top:946px;width:114px;height:17px;line-height:19px;text-align:left;padding-left:3px;">SDL-BK-0925-018</div>
<div class="c" style="left:270px;top:946px;width:70px;height:17px;line-height:19px;text-align:left;padding-left:3px;">6201.01</div>
<div class="c" style="left:340px;top:946px;width:78px;height:17px;line-height:19px;text-align:left;padding-left:3px;">30/09/2025</div>
<div class="c" style="left:418px;top:946px;width:284px;height:17px;line-height:19px;text-align:left;padding-left:3px;">Sisa Gaji+Bonus Edi</div>
<div class="c" style="left:702px;top:946px;width:133px;height:17px;line-height:19px;text-align:right;padding-right:6px;">-</div>
<div class="c" style="left:835px;top:946px;width:127px;height:17px;line-height:19px;text-align:right;padding-right:6px;">345.684</div>
<div class="c" style="left:962px;top:946px;width:130px;height:17px;line-height:19px;text-align:right;padding-right:2px;">6.720.831,00</div>
<div class="c" style="left:1207px;top:946px;width:114px;height:17px;line-height:19px;text-align:right;padding-right:20px;">-</div>
<div class="c" style="left:25px;top:963px;width:29px;height:17px;line-height:19px;text-align:right;padding-right:3px;">38</div>
<div class="c" style="left:54px;top:963px;width:34px;height:17px;line-height:19px;text-align:right;padding-right:2px;">9</div>
<div class="c" style="left:88px;top:963px;width:68px;height:17px;line-height:19px;text-align:left;padding-left:3px;">September</div>
<div class="c" style="left:156px;top:963px;width:114px;height:17px;line-height:19px;text-align:left;padding-left:3px;">SDL-BK-0925-019</div>
<div class="c" style="left:270px;top:963px;width:70px;height:17px;line-height:19px;text-align:left;padding-left:3px;">6201.01</div>
<div class="c" style="left:340px;top:963px;width:78px;height:17px;line-height:19px;text-align:left;padding-left:3px;">30/09/2025</div>
<div class="c" style="left:418px;top:963px;width:284px;height:17px;line-height:19px;text-align:left;padding-left:3px;">Sisa Gaji+Bonus Subro</div>
<div class="c" style="left:702px;top:963px;width:133px;height:17px;line-height:19px;text-align:right;padding-right:6px;">-</div>
<div class="c" style="left:835px;top:963px;width:127px;height:17px;line-height:19px;text-align:right;padding-right:6px;">284.263</div>
<div class="c" style="left:962px;top:963px;width:130px;height:17px;line-height:19px;text-align:right;padding-right:2px;">6.436.568,00</div>
<div class="c" style="left:1207px;top:963px;width:114px;height:17px;line-height:19px;text-align:right;padding-right:20px;">-</div>
<div style="position:absolute;left:1409px;top:351px;width:367px;height:18px;border:1px solid #d6d6d6;background:#fff"></div>
<div style="position:absolute;left:1898px;top:237px;width:22px;height:741px;background:#0c0c0c"></div>
<svg style="left:1902px;top:222px" width="16" height="12"><path d="M3 10 L8 3 L13 10Z" fill="#9a9a9a"/></svg>
<svg style="left:1902px;top:964px" width="16" height="12"><path d="M3 3 L13 3 L8 10Z" fill="#9a9a9a"/></svg>
<div style="position:absolute;left:1905px;top:236px;width:9px;height:595px;background:#9e9e9e;border-radius:4.5px"></div>
<div style="position:absolute;left:0px;top:978px;width:1920px;height:32px;background:#0f0f0f"></div>
<div style="position:absolute;left:0px;top:1009px;width:1920px;height:1px;background:#2e2e2e"></div>
<svg style="left:26px;top:986px" width="14" height="14"><path d="M9 2 L4 7 L9 12" stroke="#8a8a8a" stroke-width="1.4" fill="none"/></svg>
<svg style="left:57px;top:986px" width="14" height="14"><path d="M5 2 L10 7 L5 12" stroke="#8a8a8a" stroke-width="1.4" fill="none"/></svg>
<div class="t" style="left:126px;top:985px;font-size:14px;letter-spacing:-0.35px;line-height:18px;color:#f0f0f0">Note</div>
<div style="position:absolute;left:173px;top:982px;width:46px;height:23px;background:#f5b51e;border-radius:4px"></div>
<div class="t" style="left:181px;top:985px;font-size:14px;letter-spacing:-0.35px;line-height:18px;color:#202020">Final</div>
<div style="position:absolute;left:228px;top:982px;width:57px;height:23px;background:#4f8a3a;border-radius:4px"></div>
<div class="t" style="left:235px;top:985px;font-size:14px;letter-spacing:-0.35px;line-height:18px;color:#f0f0f0">PPh 21</div>
<div style="position:absolute;left:295px;top:982px;width:93px;height:23px;background:#6aac4c;border-radius:4px"></div>
<div class="t" style="left:303px;top:985px;font-size:14px;letter-spacing:-0.35px;line-height:18px;color:#1a1a1a">BP21-Kartap</div>
<div class="t" style="left:406px;top:985px;font-size:14px;letter-spacing:-0.35px;line-height:18px;color:#f0f0f0">GAJI</div>
<div style="position:absolute;left:452px;top:977px;width:117px;height:33px;background:#fff;border-radius:0 0 6px 6px"></div>
<div class="t" style="left:460px;top:983px;font-size:14px;letter-spacing:-0.2px;line-height:18px;color:#1a1a1a">Rekening Koran</div>
<div style="position:absolute;left:462px;top:1001px;width:99px;height:2px;background:#1e7145"></div>
<div class="t" style="left:587px;top:985px;font-size:14px;letter-spacing:-0.35px;line-height:18px;color:#f0f0f0">Kas Kecil</div>
<div class="t" style="left:668px;top:985px;font-size:14px;letter-spacing:-0.35px;line-height:18px;color:#f0f0f0">Rekap RK</div>
<div class="t" style="left:753px;top:985px;font-size:14px;letter-spacing:-0.35px;line-height:18px;color:#f0f0f0">Penjualan</div>
<div style="position:absolute;left:169px;top:987px;width:1px;height:16px;background:#3c3c3c"></div>
<div style="position:absolute;left:223px;top:987px;width:1px;height:16px;background:#3c3c3c"></div>
<div style="position:absolute;left:290px;top:987px;width:1px;height:16px;background:#3c3c3c"></div>
<div style="position:absolute;left:394px;top:987px;width:1px;height:16px;background:#3c3c3c"></div>
<div style="position:absolute;left:447px;top:987px;width:1px;height:16px;background:#3c3c3c"></div>
<div style="position:absolute;left:574px;top:987px;width:1px;height:16px;background:#3c3c3c"></div>
<div style="position:absolute;left:655px;top:987px;width:1px;height:16px;background:#3c3c3c"></div>
<div style="position:absolute;left:739px;top:987px;width:1px;height:16px;background:#3c3c3c"></div>
<div style="position:absolute;left:830px;top:987px;width:1px;height:16px;background:#3c3c3c"></div>
<svg style="left:870px;top:986px" width="16" height="16"><path d="M8 1 V15 M1 8 H15" stroke="#d0d0d0" stroke-width="1.3"/></svg>
<div class="t" style="left:1147px;top:984px;font-size:16px;color:#d0d0d0;font-weight:bold">&#8942;</div>
<svg style="left:1174px;top:987px" width="12" height="14"><path d="M10 2 L3 7 L10 12Z" fill="#9a9a9a"/></svg>
<div style="position:absolute;left:1188px;top:989px;width:645px;height:9px;background:#9e9e9e;border-radius:5px"></div>
<svg style="left:1884px;top:987px" width="12" height="14"><path d="M2 2 L9 7 L2 12Z" fill="#9a9a9a"/></svg>
<div style="position:absolute;left:0px;top:1010px;width:1920px;height:23px;background:#121212"></div>
<div class="t" style="left:11px;top:1015px;font-size:11px;color:#e8e8e8">Ready</div>
<div class="t" style="left:58px;top:1015px;font-size:11px;color:#e8e8e8">Filter Mode</div>
<svg style="left:136px;top:1013px" width="16" height="16"><circle cx="8" cy="3" r="2" fill="none" stroke="#ddd" stroke-width="1.2"/><path d="M2 6 L14 6 M8 6 L8 10 L4 15 M8 10 L12 15" stroke="#ddd" stroke-width="1.2" fill="none"/></svg>
<div class="t" style="left:155px;top:1015px;font-size:11px;letter-spacing:-0.2px;color:#f0f0f0;font-weight:bold">Accessibility: Investigate</div>
<div style="position:absolute;left:1620px;top:1011px;width:40px;height:21px;background:#1e1e1e"></div>
<svg style="left:0;top:0;" width="1920" height="1080"><g fill="none" stroke="#e8e8e8"><path d="M1633.5 1014.5 H1645.5 V1026.5 H1633.5 Z M1633.5 1018.5 H1645.5 M1633.5 1022.5 H1645.5 M1637.5 1014.5 V1026.5 M1641.5 1014.5 V1026.5"/><path d="M1673.5 1014.5 H1686.5 V1026.5 H1673.5 Z M1676.5 1016.5 H1683.5 V1024.5 H1676.5 Z M1678 1018.5 H1682 M1678 1020.5 H1682 M1678 1022.5 H1682"/><path d="M1713.5 1014.5 H1726.5 V1026.5 H1713.5 Z M1713.5 1020.5 H1719.5 V1014.5 M1716.5 1014.5 V1020.5"/><path d="M1746 1020.5 H1754 M1759 1021.5 H1859 M1865 1020.5 H1873 M1869.5 1016.5 V1024.5" stroke="#d8d8d8"/></g><rect x="1806" y="1016" width="5" height="11" fill="#c8c8c8"/></svg>
<div class="t" style="left:1885px;top:1015px;font-size:11.5px;color:#e8e8e8">98%</div>
<div style="position:absolute;left:0px;top:1032px;width:1920px;height:48px;background:#1c2427"></div>
<div style="position:absolute;left:0px;top:1032px;width:1920px;height:1px;background:#2c3336"></div>
<svg style="left:0;top:0" width="180" height="45"><rect x="18" y="16" width="13" height="16" rx="1" fill="#1f8f3a"/><rect x="18" y="16" width="13" height="5" fill="#7fd15a"/><rect x="18" y="21" width="13" height="5" fill="#33b04a"/><rect x="16" y="22" width="9" height="9" rx="1" fill="#0e6b38"/><path d="M18.5 24 L22.5 29 M22.5 24 L18.5 29" stroke="#fff" stroke-width="1.3"/><path d="M48.5 16.5 H63.5 V31.5 H50.5 L48.5 29.5 Z M52.5 16.5 V21.5 H59.5 V16.5 M52.5 31.5 V26.5 H59.5 V31.5" fill="none" stroke="#f0f0f0"/><path d="M78.5 16 V21.5 H84" fill="none" stroke="#f0f0f0" stroke-width="1.1"/><path d="M79 21 Q83 16.5 87 17 Q91.5 18 91.5 22.5 Q91.5 26.5 83 32" fill="none" stroke="#f0f0f0" stroke-width="1.1"/><path d="M98 22 L101 25 L104 22" fill="none" stroke="#e0e0e0" stroke-width="1.1"/><path d="M130.5 16 V21.5 H125" fill="none" stroke="#5a5a5a" stroke-width="1.1"/><path d="M130 21 Q126 16.5 122 17 Q117.5 18 117.5 22.5 Q117.5 26.5 125 32" fill="none" stroke="#5a5a5a" stroke-width="1.1"/><path d="M137 22 L140 25 L143 22" fill="none" stroke="#5a5a5a" stroke-width="1.1"/><path d="M158 21.5 H166 M159 24 L162 27 L165 24" fill="none" stroke="#f0f0f0" stroke-width="1.2"/></svg>
<div class="t" style="left:183px;top:17px;font-size:12px;letter-spacing:-0.4px;color:#f2f2f2">Kertas Kerja Sinar Duta Laser 2025&nbsp; -&nbsp; Excel</div>
<div style="position:absolute;left:785px;top:8px;width:367px;height:32px;background:#1f1f1f;border:1px solid #686868;border-radius:4px"></div>
<svg style="left:797px;top:15px" width="16" height="16"><circle cx="10" cy="6" r="4.5" fill="none" stroke="#c8c8c8" stroke-width="1.3"/><path d="M6.8 9.2 L1.5 14.5" stroke="#c8c8c8" stroke-width="1.4"/></svg>
<div class="t" style="left:826px;top:18px;font-size:12.5px;color:#c8c8c8">Search</div>
<div style="position:absolute;left:1707px;top:14px;width:58px;height:19px;background:#fff;border-radius:2px"></div>
<div class="t" style="left:1719px;top:17px;font-size:12px;color:#111">Sign in</div>
<div style="position:absolute;left:1794px;top:23px;width:12px;height:1px;background:#e0e0e0"></div>
<svg style="left:1840px;top:17px" width="14" height="14"><rect x="1.5" y="3.5" width="9" height="9" rx="1.5" fill="none" stroke="#e0e0e0" stroke-width="1.2"/><path d="M4 1.5 H11 Q12.5 1.5 12.5 3 V10" fill="none" stroke="#e0e0e0" stroke-width="1.2"/></svg>
<svg style="left:1889px;top:17px" width="14" height="14"><path d="M1 1 L13 13 M13 1 L1 13" stroke="#e8e8e8" stroke-width="1.3"/></svg>
<div style="position:absolute;left:1836px;top:50px;width:73px;height:26px;background:#3fb46a;border:1px solid #0a1a0e;border-radius:4px"></div>
<svg style="left:0;top:0" width="1920" height="80"><path d="M1842.5 61 V68.5 H1852.5 V63" fill="none" stroke="#0a0a0a" stroke-width="1.1"/><path d="M1845 65 Q1846 60.5 1851 60.5 M1848.5 58 L1851.5 60.5 L1848.5 63" fill="none" stroke="#0a0a0a" stroke-width="1.1"/><path d="M1898 62 L1900.5 64.5 L1903 62" fill="none" stroke="#0a0a0a" stroke-width="1.1"/></svg>
<div class="t" style="left:1858px;top:56px;font-size:12px;color:#0a0a0a">Share</div>
<div class="t" style="left:22px;top:56px;font-size:13px;letter-spacing:-0.25px;color:#f0f0f0">File</div>
<div class="t" style="left:68px;top:56px;font-size:13px;letter-spacing:-0.25px;color:#f0f0f0">Home</div>
<div class="t" style="left:123px;top:56px;font-size:13px;letter-spacing:-0.25px;color:#f0f0f0">Insert</div>
<div class="t" style="left:176px;top:56px;font-size:13px;letter-spacing:-0.25px;color:#f0f0f0">Draw</div>
<div class="t" style="left:229px;top:56px;font-size:13px;letter-spacing:-0.25px;color:#f0f0f0">Page Layout</div>
<div class="t" style="left:322px;top:56px;font-size:13px;letter-spacing:-0.25px;color:#f0f0f0">Formulas</div>
<div class="t" style="left:396px;top:56px;font-size:13px;letter-spacing:-0.25px;color:#f0f0f0">Data</div>
<div class="t" style="left:444px;top:56px;font-size:13px;letter-spacing:-0.25px;color:#f0f0f0">Review</div>
<div class="t" style="left:503px;top:56px;font-size:13px;letter-spacing:-0.25px;color:#f0f0f0">View</div>
<div class="t" style="left:551px;top:56px;font-size:13px;letter-spacing:-0.25px;color:#f0f0f0">Help</div>
<div class="t" style="left:599px;top:56px;font-size:13px;letter-spacing:-0.25px;color:#f0f0f0">Acrobat</div>
<div style="position:absolute;left:396px;top:72px;width:29px;height:3px;background:#3fa56b;border-radius:2px"></div>
<div style="position:absolute;left:8px;top:186px;width:102px;height:26px;background:#262626;border:1px solid #5c5c5c;border-radius:4px"></div>
<div class="t" style="left:16px;top:192px;font-size:12.5px;color:#f0f0f0">I213</div>
<svg style="left:91px;top:194px" width="12" height="10"><path d="M1 2 L6 7 L11 2" fill="none" stroke="#e0e0e0" stroke-width="1.3"/></svg>
<div class="t" style="left:113px;top:189px;font-size:16px;color:#d8d8d8;font-weight:bold">&#8942;</div>
<div style="position:absolute;left:130px;top:186px;width:74px;height:26px;background:#262626;border:1px solid #5c5c5c;border-radius:4px"></div>
<svg style="left:136px;top:192px" width="14" height="14"><path d="M1 1 L13 13 M13 1 L1 13" stroke="#6e6e6e" stroke-width="1.3"/></svg>
<svg style="left:158px;top:192px" width="16" height="14"><path d="M1 7 L6 12 L15 2" fill="none" stroke="#6e6e6e" stroke-width="1.3"/></svg>
<div class="t" style="left:183px;top:189px;font-size:16px;color:#d8d8d8;font-family:'Liberation Serif',serif;font-style:italic">fx</div>
<div style="position:absolute;left:208px;top:186px;width:1702px;height:26px;background:#262626;border:1px solid #5c5c5c;border-radius:4px"></div>
<div class="t" style="left:220px;top:192px;font-size:13px;letter-spacing:-0.28px;color:#f2f2f2">=SUMIF($C$8:$C$403;H213;$L$8:$L$298)</div>
<svg style="left:1896px;top:195px" width="12" height="9"><path d="M1 1.5 L6 6.5 L11 1.5" fill="none" stroke="#e0e0e0" stroke-width="1.3"/></svg>
<div class="t" style="left:-59px;top:121px;width:200px;text-align:center;font-size:12px;color:#f0f0f0">Get</div>
<div class="t" style="left:-59px;top:137px;width:200px;text-align:center;font-size:12px;color:#f0f0f0">Data<svg style="position:static;display:inline-block;vertical-align:1px;margin-left:3px" width="8" height="5"><path d="M1 1 L4 4 L7 1" fill="none" stroke="#e8e8e8" stroke-width="1.2"/></svg></div>
<div class="t" style="left:-11px;top:121px;width:200px;text-align:center;font-size:12px;color:#f0f0f0">From</div>
<div class="t" style="left:-11px;top:137px;width:200px;text-align:center;font-size:12px;color:#f0f0f0">Text/CSV</div>
<div class="t" style="left:38px;top:121px;width:200px;text-align:center;font-size:12px;color:#f0f0f0">From</div>
<div class="t" style="left:38px;top:137px;width:200px;text-align:center;font-size:12px;color:#f0f0f0">Web</div>
<div class="t" style="left:95px;top:121px;width:200px;text-align:center;font-size:12px;color:#f0f0f0">From Table/</div>
<div class="t" style="left:95px;top:137px;width:200px;text-align:center;font-size:12px;color:#f0f0f0">Range</div>
<div class="t" style="left:154px;top:121px;width:200px;text-align:center;font-size:12px;color:#f0f0f0">Recent</div>
<div class="t" style="left:154px;top:137px;width:200px;text-align:center;font-size:12px;color:#f0f0f0">Sources</div>
<div style="position:absolute;left:284px;top:88px;width:1px;height:42px;background:#454545"></div>
<div class="t" style="left:227px;top:121px;width:200px;text-align:center;font-size:12px;color:#f0f0f0">Existing</div>
<div class="t" style="left:227px;top:137px;width:200px;text-align:center;font-size:12px;color:#f0f0f0">Connections</div>
<div class="t" style="left:91px;top:161px;width:200px;text-align:center;font-size:12px;color:#f0f0f0">Get &amp; Transform Data</div>
<div style="position:absolute;left:371px;top:88px;width:1px;height:84px;background:#454545"></div>
<div class="t" style="left:300px;top:121px;width:200px;text-align:center;font-size:12px;color:#f0f0f0">Refresh</div>
<div class="t" style="left:300px;top:137px;width:200px;text-align:center;font-size:12px;color:#f0f0f0">All<svg style="position:static;display:inline-block;vertical-align:1px;margin-left:3px" width="8" height="5"><path d="M1 1 L4 4 L7 1" fill="none" stroke="#e8e8e8" stroke-width="1.2"/></svg></div>
<div class="t" style="left:449px;top:88px;font-size:12px;color:#f0f0f0">Queries &amp; Connections</div>
<div class="t" style="left:449px;top:114px;font-size:12px;color:#767676">Properties</div>
<div class="t" style="left:449px;top:140px;font-size:12px;color:#f0f0f0">Workbook Links</div>
<div class="t" style="left:379px;top:161px;width:200px;text-align:center;font-size:12px;color:#f0f0f0">Queries &amp; Connections</div>
<div style="position:absolute;left:588px;top:88px;width:1px;height:84px;background:#454545"></div>
<div class="t" style="left:543px;top:121px;width:200px;text-align:center;font-size:12px;color:#f0f0f0">Sort</div>
<div style="position:absolute;left:671px;top:89px;width:1px;height:62px;background:#454545"></div>
<div style="position:absolute;left:678px;top:82px;width:42px;height:76px;background:#363636;border:1px solid #6e6e6e;border-radius:5px"></div>
<div class="t" style="left:599px;top:121px;width:200px;text-align:center;font-size:12px;color:#f0f0f0">Filter</div>
<div class="t" style="left:746px;top:89px;font-size:12px;color:#f0f0f0">Clear</div>
<div class="t" style="left:746px;top:115px;font-size:12px;color:#f0f0f0">Reapply</div>
<div class="t" style="left:746px;top:141px;font-size:12px;color:#f0f0f0">Advanced</div>
<div class="t" style="left:602px;top:161px;width:200px;text-align:center;font-size:12px;color:#f0f0f0">Sort &amp; Filter</div>
<div style="position:absolute;left:815px;top:88px;width:1px;height:84px;background:#454545"></div>
<div class="t" style="left:750px;top:121px;width:200px;text-align:center;font-size:12px;color:#f0f0f0">Text to</div>
<div class="t" style="left:750px;top:137px;width:200px;text-align:center;font-size:12px;color:#f0f0f0">Columns</div>
<div class="t" style="left:799px;top:121px;width:200px;text-align:center;font-size:12px;color:#6a6a6a">Flash</div>
<div class="t" style="left:799px;top:137px;width:200px;text-align:center;font-size:12px;color:#6a6a6a">Fill</div>
<div class="t" style="left:852px;top:121px;width:200px;text-align:center;font-size:12px;color:#f0f0f0">Remove</div>
<div class="t" style="left:852px;top:137px;width:200px;text-align:center;font-size:12px;color:#f0f0f0">Duplicates</div>
<div class="t" style="left:918px;top:121px;width:200px;text-align:center;font-size:12px;color:#f0f0f0">Data</div>
<div class="t" style="left:918px;top:137px;width:200px;text-align:center;font-size:12px;color:#f0f0f0">Validation<svg style="position:static;display:inline-block;vertical-align:1px;margin-left:3px" width="8" height="5"><path d="M1 1 L4 4 L7 1" fill="none" stroke="#e8e8e8" stroke-width="1.2"/></svg></div>
<div class="t" style="left:988px;top:121px;width:200px;text-align:center;font-size:12px;color:#f0f0f0">Consolidate</div>
<div class="t" style="left:1050px;top:121px;width:200px;text-align:center;font-size:12px;color:#f0f0f0">Data</div>
<div class="t" style="left:1050px;top:137px;width:200px;text-align:center;font-size:12px;color:#f0f0f0">Model<svg style="position:static;display:inline-block;vertical-align:1px;margin-left:3px" width="8" height="5"><path d="M1 1 L4 4 L7 1" fill="none" stroke="#e8e8e8" stroke-width="1.2"/></svg></div>
<div class="t" style="left:899px;top:161px;width:200px;text-align:center;font-size:12px;color:#f0f0f0">Data Tools</div>
<div style="position:absolute;left:1183px;top:88px;width:1px;height:84px;background:#454545"></div>
<div class="t" style="left:1120px;top:121px;width:200px;text-align:center;font-size:12px;color:#f0f0f0">What-If</div>
<div class="t" style="left:1120px;top:137px;width:200px;text-align:center;font-size:12px;color:#f0f0f0">Analysis<svg style="position:static;display:inline-block;vertical-align:1px;margin-left:3px" width="8" height="5"><path d="M1 1 L4 4 L7 1" fill="none" stroke="#e8e8e8" stroke-width="1.2"/></svg></div>
<div class="t" style="left:1176px;top:121px;width:200px;text-align:center;font-size:12px;color:#f0f0f0">Forecast</div>
<div class="t" style="left:1176px;top:137px;width:200px;text-align:center;font-size:12px;color:#f0f0f0">Sheet</div>
<div class="t" style="left:1145px;top:161px;width:200px;text-align:center;font-size:12px;color:#f0f0f0">Forecast</div>
<div style="position:absolute;left:1308px;top:88px;width:1px;height:84px;background:#454545"></div>
<div class="t" style="left:1237px;top:121px;width:200px;text-align:center;font-size:12px;color:#f0f0f0">Group</div>
<div class="t" style="left:1237px;top:137px;width:200px;text-align:center;font-size:12px;color:#f0f0f0"><svg style="position:static;display:inline-block;vertical-align:1px;margin-left:0" width="8" height="5"><path d="M1 1 L4 4 L7 1" fill="none" stroke="#e8e8e8" stroke-width="1.2"/></svg></div>
<div class="t" style="left:1286px;top:121px;width:200px;text-align:center;font-size:12px;color:#f0f0f0">Ungroup</div>
<div class="t" style="left:1286px;top:137px;width:200px;text-align:center;font-size:12px;color:#f0f0f0"><svg style="position:static;display:inline-block;vertical-align:1px;margin-left:0" width="8" height="5"><path d="M1 1 L4 4 L7 1" fill="none" stroke="#e8e8e8" stroke-width="1.2"/></svg></div>
<div class="t" style="left:1339px;top:121px;width:200px;text-align:center;font-size:12px;color:#f0f0f0">Subtotal</div>
<div class="t" style="left:1490px;top:88px;font-size:12px;color:#767676">Show Detail</div>
<div class="t" style="left:1490px;top:114px;font-size:12px;color:#767676">Hide Detail</div>
<div class="t" style="left:1330px;top:161px;width:200px;text-align:center;font-size:12px;color:#f0f0f0">Outline</div>
<div style="position:absolute;left:1568px;top:88px;width:1px;height:84px;background:#454545"></div>
<svg style="left:0;top:0" width="1920" height="180"><path d="M30.5 90.5 V111.5 Q30.5 115.5 41 115.5" fill="none" stroke="#e8e8e8"/><path d="M50.5 90.5 V100" fill="none" stroke="#e8e8e8"/><ellipse cx="40.5" cy="90.5" rx="10" ry="3.5" fill="none" stroke="#e8e8e8"/><rect x="41.5" y="100.5" width="15" height="16" fill="#292929" stroke="#e8e8e8"/><path d="M41.5 102.5 H56.5 M41.5 107.5 H56.5 M41.5 112 H56.5 M46.5 102.5 V116.5 M51.5 102.5 V116.5" stroke="#e8e8e8"/><path d="M79.5 87.5 H91.5 L99.5 95.5 V114.5 H79.5 Z M91.5 87.5 V95.5 H99.5" fill="none" stroke="#e8e8e8" stroke-width="1"/><rect x="92.5" y="99.5" width="13" height="17" fill="#292929" stroke="#e8e8e8"/><path d="M95 103.5 H103 M95 106.5 H103 M95 109.5 H103 M95 112.5 H103" stroke="#e8e8e8"/><path d="M128.5 87.5 H140.5 L148.5 95.5 V114.5 H128.5 Z M140.5 87.5 V95.5 H148.5" fill="none" stroke="#e8e8e8" stroke-width="1"/><circle cx="147.5" cy="108.5" r="7.5" fill="#163252" stroke="#4a9fe0" stroke-width="1.3"/><ellipse cx="147.5" cy="108.5" rx="3" ry="7.5" fill="none" stroke="#4a9fe0"/><path d="M140 108.5 H155 M141.5 104.5 H153.5 M141.5 112.5 H153.5" stroke="#4a9fe0"/><rect x="182.5" y="87.5" width="27" height="27" fill="none" stroke="#e8e8e8"/><rect x="183" y="88" width="26" height="5" fill="#163252"/><path d="M185 90 H189 L187 92Z M194 90 H198 L196 92Z M203 90 H207 L205 92Z" fill="#8cc8f0"/><path d="M182.5 93.5 H209.5 M182.5 100.5 H209.5 M182.5 107.5 H209.5 M191.5 93.5 V114.5 M200.5 93.5 V114.5" stroke="#e8e8e8"/><path d="M244.5 87.5 H256.5 L264.5 95.5 V114.5 H244.5 Z M256.5 87.5 V95.5 H264.5" fill="none" stroke="#e8e8e8" stroke-width="1"/><circle cx="263.5" cy="109" r="7.3" fill="#163252" stroke="#6aa8e0" stroke-width="1.3"/><path d="M263.5 104.5 V109.5 H267.5" fill="none" stroke="#fff" stroke-width="1.2"/><path d="M316.5 87.5 H328.5 L336.5 95.5 V114.5 H316.5 Z M328.5 87.5 V95.5 H336.5" fill="none" stroke="#e8e8e8" stroke-width="1"/><path d="M330.5 102 V114 Q330.5 116.5 336.5 116.5 Q342.5 116.5 342.5 114 V102" fill="#292929" stroke="#e8c080"/><ellipse cx="336.5" cy="102" rx="6" ry="2.5" fill="#292929" stroke="#e8c080"/><path d="M390.5 113.5 V87.5 H403.5" fill="none" stroke="#e8e8e8"/><path d="M393.5 90.5 H403.5 L411.5 97.5 V114.5 H393.5 Z M403.5 90.5 V97.5 H411.5" fill="none" stroke="#e8e8e8" stroke-width="1"/><circle cx="409.5" cy="109.5" r="8.5" fill="#292929"/><path d="M403 107.5 A6.5 6.5 0 0 1 415.5 106.5 M416 111.5 A6.5 6.5 0 0 1 403.5 112.5" fill="none" stroke="#5cb860" stroke-width="1.3"/><path d="M412.5 106.5 H416 V103" fill="none" stroke="#5cb860" stroke-width="1.2"/><path d="M406.5 112.5 H403 V116" fill="none" stroke="#5cb860" stroke-width="1.2"/><rect x="429.5" y="87.5" width="15" height="13" fill="#163252" stroke="#e8e8e8"/><path d="M429.5 89.5 H444.5 M439.5 89.5 V100.5" stroke="#e8e8e8"/><path d="M441 92.5 H443 M441 95 H443 M441 97.5 H443" stroke="#cfe4f5"/><rect x="431.5" y="112.5" width="11" height="15" fill="none" stroke="#7a7a7a"/><path d="M434 117.5 H436 M437.5 117.5 H440 M434 121.5 H436 M437.5 121.5 H440" stroke="#7a7a7a"/><path d="M431.5 138.5 H438.5 L442.5 142.5 V153.5 H431.5 Z" fill="none" stroke="#e8e8e8"/><path d="M434 150 Q434 147 437 147 H440 M438 152 H441 Q444 152 444 149" fill="none" stroke="#4a9fe0" stroke-width="1.6"/><text x="601" y="100.8" font-size="8.5" font-family="Liberation Sans" font-weight="bold" fill="#4a9fe0">A</text><text x="601.5" y="109.8" font-size="8.5" font-family="Liberation Sans" fill="#e8e8e8">Z</text><path d="M613.5 93.5 V109 M610 105.5 L613.5 109 L617 105.5" fill="none" stroke="#e8e8e8"/><text x="601.5" y="132.8" font-size="8.5" font-family="Liberation Sans" fill="#e8e8e8">Z</text><text x="601" y="141.8" font-size="8.5" font-family="Liberation Sans" font-weight="bold" fill="#4a9fe0">A</text><path d="M613.5 125.5 V141.5 M610 138 L613.5 141.5 L617 138" fill="none" stroke="#e8e8e8"/><rect x="630.5" y="87.5" width="27" height="27" fill="#163252" stroke="#e8e8e8"/><rect x="631" y="88" width="26" height="4" fill="#707070"/><path d="M630.5 92.5 H657.5 M643.5 92.5 V114.5" stroke="#e8e8e8"/><text x="633" y="103" font-size="10" font-family="Liberation Sans" fill="#e8e8e8">Z</text><text x="633" y="113.5" font-size="10" font-family="Liberation Sans" fill="#4a9fe0">A</text><text x="646" y="103" font-size="10" font-family="Liberation Sans" fill="#4a9fe0">A</text><text x="646" y="113.5" font-size="10" font-family="Liberation Sans" fill="#e8e8e8">Z</text><path d="M685.5 87.5 H711.5 V90.5 L701.5 105 V114.5 H695.5 V105 L685.5 90.5 Z" fill="none" stroke="#e8e8e8" stroke-width="1.1"/><path d="M726.5 86.5 H741.5 V89 L735 95 V100 H732.5 V95 L726.5 89 Z" fill="none" stroke="#e8e8e8"/><path d="M736 96.5 L742 102.5 M742 96.5 L736 102.5" stroke="#e0505a" stroke-width="1.4"/><path d="M726.5 112.5 H741.5 V115 L735 121 V126 H732.5 V121 L726.5 115 Z" fill="none" stroke="#e8e8e8"/><path d="M734.5 122 A4 4 0 0 1 742 121 M742.5 125 A4 4 0 0 1 735 126" fill="none" stroke="#5cb860" stroke-width="1.3"/><path d="M726.5 138.5 H741.5 V141 L735 147 V152 H732.5 V147 L726.5 141 Z" fill="none" stroke="#e8e8e8"/><circle cx="738.5" cy="150" r="3.2" fill="none" stroke="#4a9fe0" stroke-width="1.6"/><circle cx="738.5" cy="150" r="4.6" fill="none" stroke="#4a9fe0" stroke-width="1.2" stroke-dasharray="1.6 1.4"/><path d="M838 91.5 H850 M838 95.5 H850 M841.5 99.5 H850" stroke="#e8e8e8"/><rect x="854.5" y="87.5" width="9" height="27" fill="#163252" stroke="#e8e8e8"/><path d="M854.5 96.5 H863.5 M854.5 105.5 H863.5 M857 92 H861 M857 101 H861 M857 110 H861" stroke="#e8e8e8"/><path d="M841 100 Q833 102 834 107 Q835 111 846 111" fill="none" stroke="#6aa8e0" stroke-width="1.5"/><path d="M843 107.5 L846.5 111 L843 114.5" fill="none" stroke="#6aa8e0" stroke-width="1.5"/><path d="M886.5 90.5 H913.5 V111.5 H886.5 Z M886.5 97.5 H913.5 M886.5 104.5 H913.5 M893.5 90.5 V111.5 M906.5 90.5 V111.5" fill="none" stroke="#8a8a8a"/><rect x="894" y="91" width="12" height="6" fill="#6a6a6a"/><path d="M896 85 L887 96 H892 L886 105 L898 94 H893 L898 85Z" fill="#8a8a8a" stroke="#292929" stroke-width="0.6"/><rect x="943.5" y="87.5" width="19" height="27" fill="#1a1a1a" stroke="#cfe4f5"/><rect x="944" y="88" width="18" height="8.5" fill="#1a78d0"/><rect x="944" y="105.5" width="18" height="8.5" fill="#1a78d0"/><path d="M943.5 96.5 H962.5 M943.5 105.5 H962.5" stroke="#cfe4f5"/><path d="M956.5 104 L969.5 116 M969.5 104 L956.5 116" stroke="#e0505a" stroke-width="1.3"/><path d="M1026.5 92 V89.5 H1005.5 V97.5 H1021" fill="none" stroke="#e8e8e8"/><path d="M1021.5 103.5 H1005.5 V111.5 H1021.5" fill="none" stroke="#e8e8e8"/><path d="M1021 93 L1025.5 97.5 L1035 88" fill="none" stroke="#5cb860" stroke-width="1.3"/><circle cx="1027.5" cy="107.5" r="5" fill="#5a1a20" stroke="#e0505a" stroke-width="1.4"/><path d="M1024 104 L1031 111" stroke="#e0505a" stroke-width="1.4"/><path d="M1075.5 87.5 H1086.5 V94.5 H1075.5 Z M1075.5 106.5 H1086.5 V113.5 H1075.5 Z M1075.5 94.5 V106.5" fill="none" stroke="#e8e8e8"/><path d="M1076 100.5 H1089 M1086 97.5 L1089 100.5 L1086 103.5" fill="none" stroke="#4a9fe0" stroke-width="1.2"/><rect x="1092.5" y="97.5" width="10" height="6" fill="#163252" stroke="#4a9fe0"/><path d="M1095 100.5 H1100" stroke="#4a9fe0"/><path d="M1150 86.5 L1164 93 V109 L1150 115.5 L1136 109 V93 Z" fill="#6cc83c"/><path d="M1141 96 L1150 91.5 L1163 97 V110 L1150 115.5 L1141 111Z" fill="#2e7d1e"/><path d="M1147 98 L1162 98 V111 L1147 111Z" fill="#c8f0b0"/><path d="M1147 102.5 H1162 M1147 106.5 H1162 M1152 98 V111 M1157 98 V111" stroke="#3a8a28" stroke-width="0.9"/><rect x="1206" y="90" width="9.5" height="7.5" fill="#1a78d0"/><rect x="1206" y="104.5" width="9.5" height="7.5" fill="#1a78d0"/><path d="M1205.5 89.5 H1234.5 V111.5 H1205.5 Z M1205.5 97.5 H1234.5 M1205.5 104.5 H1234.5 M1215.5 89.5 V111.5 M1224.5 89.5 V111.5" fill="none" stroke="#e8e8e8"/><path d="M1227 104 Q1227 98.5 1231.5 98.5 Q1236 98.5 1236 102.5 Q1236 105.5 1232 107 V111" fill="#292929" stroke="#6aa8e0" stroke-width="1.6"/><circle cx="1232" cy="114.5" r="1" fill="#6aa8e0"/><path d="M1261.5 88.5 H1290.5 V108.5 H1261.5 Z M1261.5 95.5 H1290.5 M1261.5 102.5 H1290.5 M1271.5 88.5 V108.5 M1281.5 88.5 V108.5" fill="none" stroke="#e8e8e8"/><path d="M1264 108.5 L1261.5 112.5 H1266" fill="none" stroke="#e8e8e8"/><path d="M1263 105 L1270 99 L1275 101 L1287 91" fill="none" stroke="#e0505a" stroke-width="1.4"/><path d="M1283 90.5 H1288 V95" fill="none" stroke="#e0505a" stroke-width="1.3"/><path d="M1263 107 L1270 102 L1276 104" fill="none" stroke="#4a9fe0" stroke-width="1.4"/><path d="M1332.5 88.5 H1330.5 V112.5 H1332.5" fill="none" stroke="#e8e8e8"/><rect x="1339.5" y="88.5" width="10" height="24" fill="none" stroke="#e8e8e8"/><path d="M1339.5 96.5 H1349.5 M1339.5 104.5 H1349.5" stroke="#e8e8e8"/><rect x="1327.5" y="96.5" width="7" height="7" fill="#292929" stroke="#8cc8f0"/><path d="M1331 98 V102 M1329 100 H1333" stroke="#8cc8f0"/><path d="M1381.5 88.5 H1379.5 V112.5 H1381.5" fill="none" stroke="#e8e8e8"/><rect x="1388.5" y="88.5" width="10" height="24" fill="none" stroke="#e8e8e8"/><path d="M1388.5 96.5 H1398.5 M1388.5 104.5 H1398.5" stroke="#e8e8e8"/><rect x="1376.5" y="96.5" width="7" height="7" fill="#8a2a30" stroke="#e0505a"/><path d="M1377.5 102.5 L1382.5 97.5" stroke="#fff"/><path d="M1429.5 88.5 H1427.5 V112.5 H1429.5" fill="none" stroke="#e8e8e8"/><rect x="1425.5" y="93.5" width="6" height="6" fill="#163252" stroke="#8cc8f0"/><rect x="1425.5" y="102.5" width="6" height="6" fill="#163252" stroke="#8cc8f0"/><rect x="1433.5" y="88.5" width="19" height="24" fill="none" stroke="#e8e8e8"/><path d="M1433.5 94.5 H1452.5 M1433.5 100.5 H1452.5 M1433.5 106.5 H1452.5 M1442.5 88.5 V112.5" stroke="#e8e8e8"/><path d="M1471 91.5 H1475 M1473 89.5 V93.5 M1477 90.5 H1485 M1479 93.5 H1485 M1479 96.5 H1485 M1477 99.5 H1485" stroke="#767676"/><path d="M1471 117.5 H1475 M1477 116.5 H1485 M1479 119.5 H1485 M1479 122.5 H1485 M1477 125.5 H1485" stroke="#767676"/><path d="M1556.5 164 V162.5 H1565 M1558 164 L1565 171 M1561 171.5 H1565.5 V167" fill="none" stroke="#bbb"/><path d="M1890 161 L1896.5 167 L1903 161" fill="none" stroke="#e0e0e0" stroke-width="1.3"/></svg>
<svg style="left:16px;top:1046px" width="30" height="24"><defs><linearGradient id="cl" x1="0" y1="0" x2="0" y2="1"><stop offset="0" stop-color="#b8d4f0"/><stop offset="1" stop-color="#e8f0fa"/></linearGradient></defs><path d="M4 20 Q1 20 1 17 Q1 14 5 14 Q6 9 12 9 Q17 9 19 13 Q25 13 25 17 Q25 20 22 20 Z" fill="url(#cl)"/></svg>
<svg style="left:30px;top:1038px" width="16" height="16"><circle cx="8" cy="8" r="7.5" fill="#f4a3ab"/><text x="8" y="12" font-size="10" text-anchor="middle" font-family="Liberation Sans" fill="#3a1015">5</text></svg>
<div class="t" style="left:50px;top:1041px;font-size:11.5px;color:#f0f0f0">30°C</div>
<div class="t" style="left:50px;top:1057px;font-size:11.5px;color:#d8d8d8">Berawan</div>
<svg style="left:572px;top:1044px" width="25" height="25"><defs><linearGradient id="wl" x1="0" y1="0" x2="1" y2="1"><stop offset="0" stop-color="#6fd3ff"/><stop offset="1" stop-color="#1a8fe0"/></linearGradient></defs><rect x="0" y="0" width="11.5" height="11.5" fill="url(#wl)"/><rect x="12.5" y="0" width="11.5" height="11.5" fill="url(#wl)"/><rect x="0" y="12.5" width="11.5" height="11.5" fill="url(#wl)"/><rect x="12.5" y="12.5" width="11.5" height="11.5" fill="url(#wl)"/></svg>
<div style="position:absolute;left:609px;top:1040px;width:220px;height:32px;background:#2d3336;border:1px solid #41474a;border-radius:16px"></div>
<svg style="left:620px;top:1047px" width="18" height="18"><circle cx="7.5" cy="7.5" r="5.5" fill="none" stroke="#e0e0e0" stroke-width="1.6"/><path d="M11.5 11.5 L16 16" stroke="#e0e0e0" stroke-width="1.8"/></svg>
<div class="t" style="left:646px;top:1048px;font-size:13px;color:#d8d8d8">Search</div>
<svg style="left:778px;top:1042px" width="45" height="28"><ellipse cx="22" cy="24" rx="20" ry="3" fill="#d8c8a8"/><path d="M10 10 Q8 6 12 6 L16 8 H32 Q36 9 36 14 V22 H34 V15 H18 V22 H16 V14 Q12 14 10 10Z" fill="#b8b0c8"/><path d="M20 8 V15 M24 8 V15 M28 8 V15 M32 9 V15" stroke="#4a405a" stroke-width="1.5"/></svg>
<svg style="left:840px;top:1044px" width="26" height="24"><rect x="1" y="7" width="16" height="15" rx="2" fill="#8a8e92"/><rect x="8" y="2" width="17" height="15" rx="2" fill="#e8e8e8"/></svg>
<svg style="left:884px;top:1043px" width="28" height="26"><path d="M1 4 Q1 2 3 2 H10 L13 5 H25 Q27 5 27 7 V22 Q27 24 25 24 H3 Q1 24 1 22Z" fill="#f5c040"/><rect x="1" y="8" width="26" height="16" rx="1.5" fill="#ffd75e"/><rect x="9" y="16" width="11" height="8" fill="#1e88e5"/></svg>
<div style="position:absolute;left:893px;top:1074px;width:8px;height:3px;background:#8a8e92;border-radius:2px"></div>
<svg style="left:928px;top:1043px" width="26" height="26"><defs><linearGradient id="eg" x1="0" y1="0" x2="1" y2="1"><stop offset="0" stop-color="#35c1f1"/><stop offset="0.5" stop-color="#1a8fd8"/><stop offset="1" stop-color="#62d04a"/></linearGradient></defs><circle cx="13" cy="13" r="12" fill="url(#eg)"/><path d="M7 15 Q8 9 14 9 Q19 9 19 13 H10 Q11 18 17 18 Q20 18 22 17 Q19 23 13 22 Q7 21 7 15Z" fill="#0c4f8a"/></svg>
<svg style="left:972px;top:1043px" width="26" height="26"><path d="M9 5 Q9 1 13 1 Q17 1 17 5" fill="none" stroke="#4cb5f5" stroke-width="2"/><rect x="1" y="5" width="24" height="20" rx="3" fill="#f0f0f0"/><rect x="8" y="10" width="4.5" height="4.5" fill="#f25022"/><rect x="13.5" y="10" width="4.5" height="4.5" fill="#7fba00"/><rect x="8" y="15.5" width="4.5" height="4.5" fill="#00a4ef"/><rect x="13.5" y="15.5" width="4.5" height="4.5" fill="#ffb900"/></svg>
<svg style="left:1016px;top:1043px" width="26" height="26"><path d="M13 1 A12 12 0 1 1 6 22.5 L1.5 24.5 L3.5 20 A12 12 0 0 1 13 1Z" fill="none" stroke="#25d366" stroke-width="2.2"/><path d="M8.5 8 Q9.5 6.5 11 8 L12 10.5 Q12 11.5 11 12 Q12.5 15 15 16 Q15.5 15 16.5 15 L19 16.2 Q19.5 17.5 18 18.5 Q16 19.5 12 17 Q8 14 7.5 11 Q7.5 9 8.5 8Z" fill="#25d366"/></svg>
<div style="position:absolute;left:1026px;top:1074px;width:8px;height:3px;background:#8a8e92;border-radius:2px"></div>
<svg style="left:1059px;top:1042px" width="30" height="28"><circle cx="13" cy="15" r="12" fill="#db4437"/><path d="M13 15 L1.5 18.5 A12 12 0 0 0 19 25.4Z" fill="#0f9d58"/><path d="M13 15 L19 25.4 A12 12 0 0 0 24.5 11 Z" fill="#f4c20d"/><circle cx="13" cy="15" r="5.5" fill="#fff"/><circle cx="13" cy="15" r="4.2" fill="#4285f4"/><circle cx="22" cy="6" r="6" fill="#6b4c3b"/><text x="22" y="9.5" font-size="9" text-anchor="middle" font-family="Liberation Sans" fill="#fff">k</text></svg>
<div style="position:absolute;left:1069px;top:1074px;width:8px;height:3px;background:#8a8e92;border-radius:2px"></div>
<svg style="left:1103px;top:1043px" width="28" height="27"><rect x="1" y="2" width="18" height="16" rx="2" fill="#f5f5f5"/><path d="M3 4 H8 M3 4 V9" stroke="#e05030" stroke-width="2.5"/><rect x="6" y="7" width="11" height="9" fill="#dcdcdc"/><path d="M14 10 L17 20 M20 10 L17 20" stroke="#999" stroke-width="1.5"/><circle cx="14" cy="22.5" r="2.5" fill="none" stroke="#1a90e0" stroke-width="1.5"/><circle cx="23" cy="19" r="2.5" fill="none" stroke="#1a90e0" stroke-width="1.5"/></svg>
<svg style="left:1150px;top:1043px" width="20" height="26"><rect x="1" y="1" width="18" height="24" rx="2" fill="#5a6570"/><rect x="3" y="3" width="14" height="4" fill="#5ac8f0"/><path d="M3 10 H7 V13 H3Z M8 10 H12 V13 H8Z M3 15 H7 V18 H3Z M8 15 H12 V18 H8Z M3 20 H7 V23 H3Z M8 20 H12 V23 H8Z" fill="#d0d8e0"/><rect x="13" y="10" width="4" height="13" fill="#1e78c8"/></svg>
<svg style="left:1193px;top:1043px" width="22" height="27"><rect x="1" y="3" width="20" height="22" rx="1.5" fill="#3ab4f2"/><rect x="1" y="22" width="20" height="3" fill="#e08030"/><path d="M4 9 H18 M4 13 H18 M4 17 H18" stroke="#0a5590" stroke-width="1.6"/><path d="M4 1 V5 M8 1 V5 M12 1 V5 M16 1 V5" stroke="#cfeaff" stroke-width="1"/></svg>
<svg style="left:1236px;top:1043px" width="26" height="26"><circle cx="13" cy="13" r="12" fill="#e8384f"/><path d="M8 18 L13 7 L18 18" fill="none" stroke="#fff" stroke-width="2.2"/></svg>
<div style="position:absolute;left:1245px;top:1074px;width:8px;height:3px;background:#8a8e92;border-radius:2px"></div>
<div style="position:absolute;left:1274px;top:1037px;width:39px;height:40px;background:#2b3336;border:1px solid #3a4245;border-radius:5px"></div>
<svg style="left:1280px;top:1043px" width="27" height="26"><rect x="6" y="1" width="20" height="24" rx="2" fill="#21a366"/><rect x="6" y="1" width="20" height="8" fill="#33c481"/><rect x="6" y="17" width="20" height="8" fill="#107c41"/><rect x="1" y="8" width="13" height="13" rx="1.5" fill="#107c41"/><path d="M4.5 11 L10.5 18 M10.5 11 L4.5 18" stroke="#fff" stroke-width="1.6"/></svg>
<div style="position:absolute;left:1284px;top:1074px;width:19px;height:3px;background:#4cc2ff;border-radius:2px"></div>
<svg style="left:1323px;top:1043px" width="26" height="24"><rect x="1" y="2" width="24" height="20" rx="2" fill="#3c3c3c"/><rect x="1" y="2" width="24" height="4" fill="#5a5a5a"/><path d="M5 10 L9 13 L5 16" fill="none" stroke="#f0f0f0" stroke-width="1.5"/><path d="M11 17 H17" stroke="#f0f0f0" stroke-width="1.5"/></svg>
<div style="position:absolute;left:1333px;top:1074px;width:8px;height:3px;background:#8a8e92;border-radius:2px"></div>
<svg style="left:1694px;top:1050px" width="15" height="10"><path d="M1.5 8 L7.5 2 L13.5 8" fill="none" stroke="#e8e8e8" stroke-width="1.4"/></svg>
<svg style="left:1725px;top:1047px" width="19" height="16"><path d="M4 13 Q1 13 1 10 Q1 7 4 7 Q5 3 9 3 Q13 3 14 7 Q18 7 18 10 Q18 13 15 13Z" fill="#7a7a7a"/><path d="M2 1 L16 15" stroke="#e0e0e0" stroke-width="1.2"/></svg>
<svg style="left:1757px;top:1047px" width="19" height="17"><path d="M1 2 H10 V11 H1Z M3 14 H9 M6 11 V14" fill="none" stroke="#e8e8e8" stroke-width="1.2"/><path d="M12 1 H15 V5 H12Z M13.5 5 V15" fill="none" stroke="#e8e8e8" stroke-width="1.1"/></svg>
<svg style="left:1781px;top:1048px" width="18" height="15"><path d="M1 5 H4 L8 1.5 V13.5 L4 10 H1Z" fill="none" stroke="#e8e8e8" stroke-width="1.2"/><path d="M10.5 5 Q12 7.5 10.5 10 M12.5 3 Q15.5 7.5 12.5 12 M14.5 1.5 Q18.5 7.5 14.5 13.5" fill="none" stroke="#e8e8e8" stroke-width="1.1"/></svg>
<div class="t" style="left:1777px;top:1040px;width:100px;text-align:right;font-size:12px;color:#f0f0f0">12:45</div>
<div class="t" style="left:1777px;top:1056px;width:100px;text-align:right;font-size:12px;color:#f0f0f0">31/01/2026</div>
<svg style="left:1884px;top:1047px" width="18" height="17"><path d="M3 12 V8 Q3 3 8 3 Q13 3 13 8 V12 L14.5 13.5 H1.5Z" fill="#f0f0f0"/><path d="M6 15 Q8 17 10 15" fill="#f0f0f0" stroke="#f0f0f0"/><text x="5" y="11" font-size="6" font-family="Liberation Sans" fill="#1d2628">z</text><text x="12" y="6" font-size="7" font-family="Liberation Sans" font-weight="bold" fill="#f0f0f0">z</text></svg>
</body></html>
